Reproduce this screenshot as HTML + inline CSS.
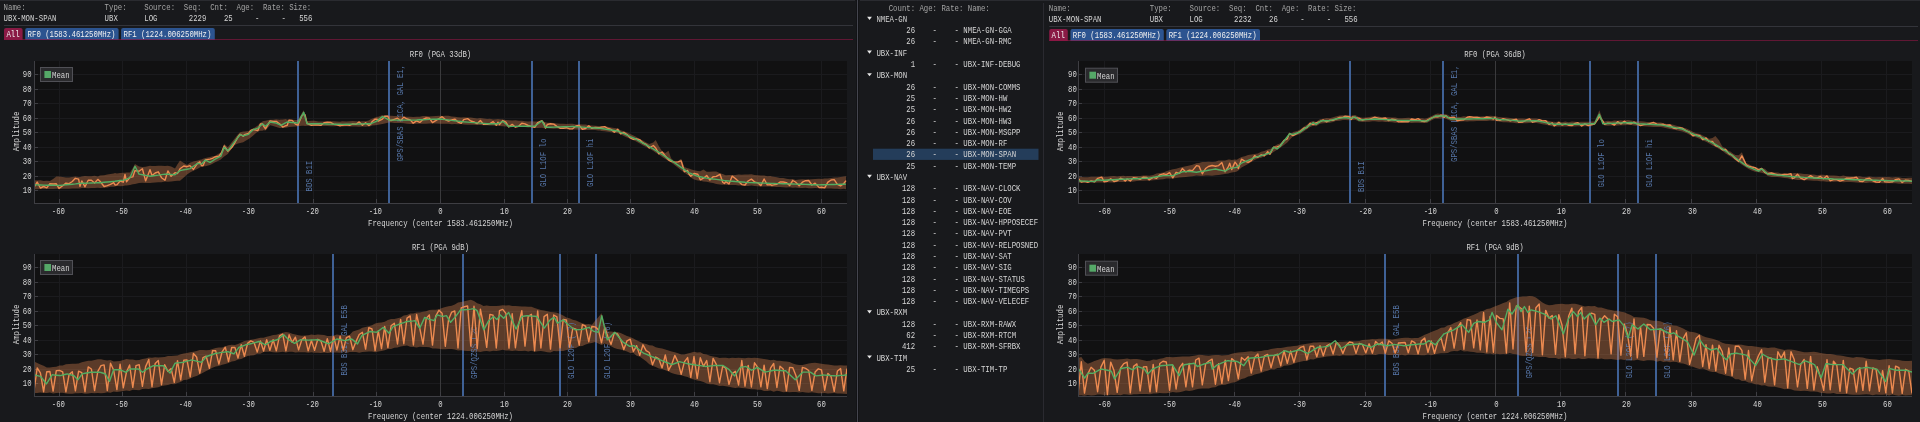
<!DOCTYPE html>
<html><head><meta charset="utf-8"><style>
html,body{margin:0;padding:0;background:#18191c;width:1920px;height:422px;overflow:hidden}
svg{display:block;will-change:transform}
text{font-family:"Liberation Mono",monospace;white-space:pre}
</style></head><body>
<svg width="1920" height="422" viewBox="0 0 1920 422">
<rect x="0" y="0" width="1920" height="422" fill="#18191c"/>
<rect x="0" y="0" width="855" height="1" fill="#2a2b30"/>
<rect x="860" y="0" width="1060" height="1" fill="#2a2b30"/>
<text transform="translate(3.60,10.00) scale(0.863,1)" fill="#a4a4a4" font-size="8.5">Name:</text>
<text transform="translate(104.60,10.00) scale(0.863,1)" fill="#a4a4a4" font-size="8.5">Type:</text>
<text transform="translate(144.30,10.00) scale(0.863,1)" fill="#a4a4a4" font-size="8.5">Source:</text>
<text transform="translate(183.80,10.00) scale(0.863,1)" fill="#a4a4a4" font-size="8.5">Seq:</text>
<text transform="translate(210.20,10.00) scale(0.863,1)" fill="#a4a4a4" font-size="8.5">Cnt:</text>
<text transform="translate(236.50,10.00) scale(0.863,1)" fill="#a4a4a4" font-size="8.5">Age:</text>
<text transform="translate(262.90,10.00) scale(0.863,1)" fill="#a4a4a4" font-size="8.5">Rate:</text>
<text transform="translate(289.20,10.00) scale(0.863,1)" fill="#a4a4a4" font-size="8.5">Size:</text>
<text transform="translate(3.60,21.00) scale(0.863,1)" fill="#d6d6d6" font-size="8.5">UBX-MON-SPAN</text>
<text transform="translate(104.60,21.00) scale(0.863,1)" fill="#d6d6d6" font-size="8.5">UBX</text>
<text transform="translate(144.30,21.00) scale(0.863,1)" fill="#d6d6d6" font-size="8.5">LOG</text>
<text transform="translate(206.40,21.00) scale(0.863,1)" fill="#d6d6d6" font-size="8.5" text-anchor="end">2229</text>
<text transform="translate(232.70,21.00) scale(0.863,1)" fill="#d6d6d6" font-size="8.5" text-anchor="end">25</text>
<text transform="translate(255.10,21.00) scale(0.863,1)" fill="#d6d6d6" font-size="8.5">-</text>
<text transform="translate(281.50,21.00) scale(0.863,1)" fill="#d6d6d6" font-size="8.5">-</text>
<text transform="translate(312.40,21.00) scale(0.863,1)" fill="#d6d6d6" font-size="8.5" text-anchor="end">556</text>
<rect x="4" y="25" width="849" height="1" fill="#33343a"/>
<path d="M4,40 V30 q0,-2 2,-2 H20.6 q2,0 2,2 V40 Z" fill="#8a1a45"/>
<text transform="translate(6.40,37.00) scale(0.863,1)" fill="#f0f0f0" font-size="8.5">All</text>
<path d="M25.2,40 V30 q0,-2 2,-2 H116.6 q2,0 2,2 V40 Z" fill="#2c5490"/>
<text transform="translate(27.60,37.00) scale(0.863,1)" fill="#f0f0f0" font-size="8.5">RF0 (1583.461250MHz)</text>
<path d="M121.1,40 V30 q0,-2 2,-2 H212.8 q2,0 2,2 V40 Z" fill="#2c5490"/>
<text transform="translate(123.50,37.00) scale(0.863,1)" fill="#f0f0f0" font-size="8.5">RF1 (1224.006250MHz)</text>
<rect x="4" y="39" width="849" height="1" fill="#8c1744" fill-opacity="0.62"/>
<text transform="translate(440.50,56.50) scale(0.863,1)" fill="#d6d6d6" font-size="8.5" text-anchor="middle">RF0 (PGA 33dB)</text>
<rect x="34.00" y="61" width="813.00" height="142.00" fill="#111112"/>
<rect x="34" y="190" width="813.00" height="1" fill="#1b1b1e"/>
<rect x="34" y="190" width="4" height="1" fill="#3e3e43"/>
<text transform="translate(31.60,193.30) scale(0.863,1)" fill="#d6d6d6" font-size="8.5" text-anchor="end">10</text>
<rect x="34" y="176" width="813.00" height="1" fill="#1b1b1e"/>
<rect x="34" y="176" width="4" height="1" fill="#3e3e43"/>
<text transform="translate(31.60,179.30) scale(0.863,1)" fill="#d6d6d6" font-size="8.5" text-anchor="end">20</text>
<rect x="34" y="161" width="813.00" height="1" fill="#1b1b1e"/>
<rect x="34" y="161" width="4" height="1" fill="#3e3e43"/>
<text transform="translate(31.60,164.30) scale(0.863,1)" fill="#d6d6d6" font-size="8.5" text-anchor="end">30</text>
<rect x="34" y="147" width="813.00" height="1" fill="#1b1b1e"/>
<rect x="34" y="147" width="4" height="1" fill="#3e3e43"/>
<text transform="translate(31.60,150.30) scale(0.863,1)" fill="#d6d6d6" font-size="8.5" text-anchor="end">40</text>
<rect x="34" y="132" width="813.00" height="1" fill="#1b1b1e"/>
<rect x="34" y="132" width="4" height="1" fill="#3e3e43"/>
<text transform="translate(31.60,135.30) scale(0.863,1)" fill="#d6d6d6" font-size="8.5" text-anchor="end">50</text>
<rect x="34" y="118" width="813.00" height="1" fill="#1b1b1e"/>
<rect x="34" y="118" width="4" height="1" fill="#3e3e43"/>
<text transform="translate(31.60,121.30) scale(0.863,1)" fill="#d6d6d6" font-size="8.5" text-anchor="end">60</text>
<rect x="34" y="103" width="813.00" height="1" fill="#1b1b1e"/>
<rect x="34" y="103" width="4" height="1" fill="#3e3e43"/>
<text transform="translate(31.60,106.30) scale(0.863,1)" fill="#d6d6d6" font-size="8.5" text-anchor="end">70</text>
<rect x="34" y="89" width="813.00" height="1" fill="#1b1b1e"/>
<rect x="34" y="89" width="4" height="1" fill="#3e3e43"/>
<text transform="translate(31.60,92.30) scale(0.863,1)" fill="#d6d6d6" font-size="8.5" text-anchor="end">80</text>
<rect x="34" y="74" width="813.00" height="1" fill="#1b1b1e"/>
<rect x="34" y="74" width="4" height="1" fill="#3e3e43"/>
<text transform="translate(31.60,77.30) scale(0.863,1)" fill="#d6d6d6" font-size="8.5" text-anchor="end">90</text>
<rect x="59" y="61" width="1" height="142.00" fill="#1b1b1e"/>
<rect x="59" y="199.00" width="1" height="4" fill="#3e3e43"/>
<text transform="translate(58.40,213.75) scale(0.863,1)" fill="#d6d6d6" font-size="8.5" text-anchor="middle">-60</text>
<rect x="122" y="61" width="1" height="142.00" fill="#1b1b1e"/>
<rect x="122" y="199.00" width="1" height="4" fill="#3e3e43"/>
<text transform="translate(121.40,213.75) scale(0.863,1)" fill="#d6d6d6" font-size="8.5" text-anchor="middle">-50</text>
<rect x="186" y="61" width="1" height="142.00" fill="#1b1b1e"/>
<rect x="186" y="199.00" width="1" height="4" fill="#3e3e43"/>
<text transform="translate(185.40,213.75) scale(0.863,1)" fill="#d6d6d6" font-size="8.5" text-anchor="middle">-40</text>
<rect x="249" y="61" width="1" height="142.00" fill="#1b1b1e"/>
<rect x="249" y="199.00" width="1" height="4" fill="#3e3e43"/>
<text transform="translate(248.40,213.75) scale(0.863,1)" fill="#d6d6d6" font-size="8.5" text-anchor="middle">-30</text>
<rect x="313" y="61" width="1" height="142.00" fill="#1b1b1e"/>
<rect x="313" y="199.00" width="1" height="4" fill="#3e3e43"/>
<text transform="translate(312.40,213.75) scale(0.863,1)" fill="#d6d6d6" font-size="8.5" text-anchor="middle">-20</text>
<rect x="376" y="61" width="1" height="142.00" fill="#1b1b1e"/>
<rect x="376" y="199.00" width="1" height="4" fill="#3e3e43"/>
<text transform="translate(375.40,213.75) scale(0.863,1)" fill="#d6d6d6" font-size="8.5" text-anchor="middle">-10</text>
<rect x="440" y="61" width="1" height="142.00" fill="#3a3a3c"/>
<rect x="440" y="199.00" width="1" height="4" fill="#3e3e43"/>
<text transform="translate(440.50,213.75) scale(0.863,1)" fill="#d6d6d6" font-size="8.5" text-anchor="middle">0</text>
<rect x="504" y="61" width="1" height="142.00" fill="#1b1b1e"/>
<rect x="504" y="199.00" width="1" height="4" fill="#3e3e43"/>
<text transform="translate(504.50,213.75) scale(0.863,1)" fill="#d6d6d6" font-size="8.5" text-anchor="middle">10</text>
<rect x="567" y="61" width="1" height="142.00" fill="#1b1b1e"/>
<rect x="567" y="199.00" width="1" height="4" fill="#3e3e43"/>
<text transform="translate(567.50,213.75) scale(0.863,1)" fill="#d6d6d6" font-size="8.5" text-anchor="middle">20</text>
<rect x="630" y="61" width="1" height="142.00" fill="#1b1b1e"/>
<rect x="630" y="199.00" width="1" height="4" fill="#3e3e43"/>
<text transform="translate(630.50,213.75) scale(0.863,1)" fill="#d6d6d6" font-size="8.5" text-anchor="middle">30</text>
<rect x="694" y="61" width="1" height="142.00" fill="#1b1b1e"/>
<rect x="694" y="199.00" width="1" height="4" fill="#3e3e43"/>
<text transform="translate(694.50,213.75) scale(0.863,1)" fill="#d6d6d6" font-size="8.5" text-anchor="middle">40</text>
<rect x="757" y="61" width="1" height="142.00" fill="#1b1b1e"/>
<rect x="757" y="199.00" width="1" height="4" fill="#3e3e43"/>
<text transform="translate(757.50,213.75) scale(0.863,1)" fill="#d6d6d6" font-size="8.5" text-anchor="middle">50</text>
<rect x="821" y="61" width="1" height="142.00" fill="#1b1b1e"/>
<rect x="821" y="199.00" width="1" height="4" fill="#3e3e43"/>
<text transform="translate(821.50,213.75) scale(0.863,1)" fill="#d6d6d6" font-size="8.5" text-anchor="middle">60</text>
<text transform="translate(440.50,225.75) scale(0.863,1)" fill="#d6d6d6" font-size="8.5" text-anchor="middle">Frequency (center 1583.461250MHz)</text>
<text transform="translate(18.60,131.50) rotate(-90) scale(0.863,1)" fill="#d6d6d6" font-size="8.5" text-anchor="middle">Amplitude</text>
<clipPath id="c0_61"><rect x="34.00" y="61" width="813.00" height="142.00"/></clipPath>
<g clip-path="url(#c0_61)">
<rect x="297" y="61" width="2" height="142.00" fill="#3f6196"/>
<rect x="388" y="61" width="2" height="142.00" fill="#3f6196"/>
<rect x="531" y="61" width="2" height="142.00" fill="#3f6196"/>
<rect x="578" y="61" width="2" height="142.00" fill="#3f6196"/>
<polygon points="34.0,180.2 37.2,180.5 40.4,180.3 43.6,180.9 46.8,180.7 49.9,181.0 53.1,179.0 56.3,176.4 59.0,176.6 62.7,177.0 65.9,177.6 69.1,177.5 72.3,177.1 75.4,176.6 78.6,177.1 80.0,176.9 81.8,176.5 85.0,176.1 88.2,176.3 91.4,176.3 94.6,175.7 97.8,176.4 100.0,175.6 104.1,175.2 107.3,174.6 110.5,174.0 113.7,173.6 115.0,173.1 116.9,173.5 120.1,172.9 123.3,172.7 125.0,172.8 126.5,172.5 130.0,172.6 132.8,167.9 135.0,164.0 139.0,166.5 142.4,167.0 145.6,166.7 150.0,165.8 152.0,165.9 155.2,166.1 158.3,165.7 161.5,165.7 165.0,166.1 167.9,165.8 171.1,166.5 175.0,168.5 177.5,164.3 180.0,160.4 183.8,163.0 187.0,164.9 190.0,162.7 193.4,161.4 197.7,160.6 199.8,159.7 201.6,159.6 203.0,158.7 205.4,158.0 210.0,157.0 212.5,156.2 214.7,156.0 218.9,153.6 220.8,152.7 222.1,149.3 224.2,143.9 227.8,147.3 231.7,142.2 234.7,138.6 238.0,134.3 240.1,132.2 243.2,131.5 244.4,131.5 248.6,131.0 250.8,129.7 253.2,128.6 257.8,125.5 260.4,122.8 262.4,121.5 263.6,120.9 265.5,120.7 270.1,119.7 273.1,119.8 276.3,119.2 279.5,119.7 280.9,119.6 282.7,119.5 285.9,119.1 287.1,119.7 289.1,119.6 292.2,119.8 295.4,119.9 297.9,120.1 301.8,113.2 303.7,110.3 305.0,114.4 307.1,121.2 311.4,120.8 314.6,120.8 318.4,121.4 320.9,121.4 324.1,121.4 327.3,121.4 330.5,121.2 333.7,121.2 336.9,121.4 340.1,121.7 342.1,121.3 346.4,121.4 349.6,121.3 352.8,121.0 356.0,121.2 359.2,121.4 362.4,121.3 365.6,121.3 368.8,120.6 370.6,119.2 372.0,118.8 375.1,117.5 377.0,116.8 378.3,116.7 382.4,115.1 384.7,115.4 387.9,115.2 389.5,115.7 391.1,115.8 394.3,115.9 397.5,116.1 400.6,116.1 403.8,116.5 407.0,116.8 410.2,116.8 413.2,117.0 416.6,116.7 419.8,116.8 423.0,116.0 426.2,116.1 429.3,116.4 432.5,116.2 435.7,116.0 440.0,115.8 442.1,116.1 445.3,115.8 448.5,115.8 451.7,116.5 454.8,116.7 458.0,117.2 461.2,117.4 463.7,117.3 467.6,117.6 470.8,117.4 474.0,118.1 477.2,118.5 480.4,117.9 483.5,118.5 487.4,119.0 489.9,118.8 493.1,119.5 496.3,119.3 498.0,119.0 499.5,119.2 502.8,119.5 505.9,120.1 508.7,120.2 512.2,120.6 515.4,120.3 518.6,120.7 521.8,120.7 525.0,121.3 528.2,121.5 531.4,121.3 534.8,121.4 537.7,121.6 541.9,122.0 544.1,122.1 545.5,122.2 547.3,122.8 550.5,122.7 553.7,123.1 556.9,123.5 560.1,123.7 563.2,123.7 566.4,124.0 569.6,123.8 572.7,123.8 576.0,124.4 579.2,124.2 582.4,124.4 585.6,124.6 588.8,125.3 591.9,125.6 595.1,125.8 598.3,126.0 600.0,126.1 601.5,126.0 604.7,126.3 607.9,126.8 611.1,127.6 614.3,127.9 617.8,128.4 620.6,130.2 623.8,131.2 627.0,132.4 630.2,133.9 633.4,135.4 635.6,136.6 639.8,139.2 643.0,140.4 646.1,142.5 649.3,143.9 653.3,142.5 655.7,140.0 658.9,146.2 662.1,151.3 665.3,153.1 668.5,150.8 671.1,158.3 674.8,161.8 678.0,161.0 681.2,158.7 684.4,167.1 687.6,168.2 688.9,168.4 690.8,169.2 694.0,170.2 697.8,171.0 700.3,171.3 703.5,169.6 706.7,171.7 709.9,171.7 713.1,171.6 716.3,171.4 720.0,173.3 722.7,174.0 724.4,174.7 725.8,175.2 729.0,175.1 732.2,174.9 735.4,174.9 738.6,174.5 741.8,174.7 745.0,174.5 748.1,174.6 751.4,174.3 754.5,175.0 757.7,175.3 760.9,175.5 764.1,175.5 767.3,176.2 770.5,176.1 771.8,176.6 773.7,176.8 776.9,177.2 780.0,178.1 783.2,178.1 786.4,178.8 789.6,179.3 792.8,179.1 795.5,180.0 799.2,179.6 802.4,179.3 805.6,179.4 808.7,179.4 811.9,179.2 815.1,179.1 819.2,178.8 821.5,179.1 824.7,178.5 827.9,178.4 831.1,178.1 834.2,177.4 837.4,177.4 840.6,177.0 843.8,176.6 846.0,176.3 846.0,189.3 843.8,188.8 840.6,189.2 837.4,188.8 834.2,188.8 831.1,188.6 827.9,188.6 824.7,188.6 821.5,188.5 819.2,188.2 815.1,188.1 811.9,188.2 808.7,188.3 805.6,187.8 802.4,187.9 799.2,187.9 795.5,187.6 792.8,187.7 789.6,187.2 786.4,187.5 783.2,187.2 780.0,186.9 776.9,187.0 773.7,186.7 771.8,187.0 770.5,186.5 767.3,186.4 764.1,186.4 760.9,186.5 757.7,186.3 754.5,186.0 751.4,185.6 748.1,186.0 745.0,185.9 741.8,185.3 738.6,185.5 735.4,185.0 732.2,185.1 729.0,184.9 725.8,184.8 724.4,184.6 722.7,184.8 720.0,184.6 716.3,183.9 713.1,183.1 709.9,182.4 706.7,181.8 703.5,181.4 700.3,180.7 697.8,180.4 694.0,179.4 690.8,177.5 688.9,175.5 687.6,174.9 684.4,172.5 681.2,170.2 678.0,167.8 674.8,165.3 671.1,162.5 668.5,160.9 665.3,159.0 662.1,156.9 658.9,154.5 655.7,152.7 653.3,150.9 649.3,148.6 646.1,146.9 643.0,145.5 639.8,143.4 635.6,141.3 633.4,140.3 630.2,138.8 627.0,137.5 623.8,136.1 620.6,134.3 617.8,133.2 614.3,132.8 611.1,132.3 607.9,131.8 604.7,131.3 601.5,130.9 600.0,130.4 598.3,130.4 595.1,130.1 591.9,130.0 588.8,129.9 585.6,130.0 582.4,129.9 579.2,129.8 576.0,129.5 572.7,129.5 569.6,129.4 566.4,129.2 563.2,128.9 560.1,128.8 556.9,128.5 553.7,128.7 550.5,128.5 547.3,128.3 545.5,128.3 544.1,128.2 541.9,127.7 537.7,127.9 534.8,127.8 531.4,127.3 528.2,127.6 525.0,127.1 521.8,127.0 518.6,127.1 515.4,126.9 512.2,126.7 508.7,126.6 505.9,126.4 502.8,126.3 499.5,126.0 498.0,125.9 496.3,125.7 493.1,125.6 489.9,125.6 487.4,125.3 483.5,125.3 480.4,125.0 477.2,125.1 474.0,124.8 470.8,124.8 467.6,124.7 463.7,124.4 461.2,124.1 458.0,124.2 454.8,124.0 451.7,124.2 448.5,123.7 445.3,123.7 442.1,123.8 440.0,123.7 435.7,123.4 432.5,123.6 429.3,123.5 426.2,123.7 423.0,123.7 419.8,123.7 416.6,123.8 413.2,124.0 410.2,124.0 407.0,123.8 403.8,123.3 400.6,123.1 397.5,123.0 394.3,123.1 391.1,122.6 389.5,122.6 387.9,122.8 384.7,123.5 382.4,123.9 378.3,124.7 377.0,125.0 375.1,125.3 372.0,125.6 370.6,126.2 368.8,126.3 365.6,126.8 362.4,126.6 359.2,126.8 356.0,126.6 352.8,126.5 349.6,126.6 346.4,126.2 342.1,126.6 340.1,126.3 336.9,126.1 333.7,126.3 330.5,126.3 327.3,125.9 324.1,126.0 320.9,125.8 318.4,125.9 314.6,125.8 311.4,125.9 307.1,125.7 305.0,125.9 303.7,125.7 301.8,125.8 297.9,126.2 295.4,126.4 292.2,126.8 289.1,127.1 287.1,127.4 285.9,127.7 282.7,127.9 280.9,128.1 279.5,128.1 276.3,127.0 273.1,126.0 270.1,125.2 265.5,130.4 263.6,130.3 262.4,130.8 260.4,130.7 257.8,131.4 253.2,135.4 250.8,137.6 248.6,138.9 244.4,141.5 243.2,142.3 240.1,142.9 238.0,143.6 234.7,144.9 231.7,148.7 227.8,153.9 224.2,156.6 222.1,158.2 220.8,159.4 218.9,160.5 214.7,162.6 212.5,163.7 210.0,165.1 205.4,166.2 203.0,166.3 201.6,166.6 199.8,167.4 197.7,168.8 193.4,170.8 190.0,172.5 187.0,174.6 183.8,177.5 180.0,180.8 177.5,180.8 175.0,180.9 171.1,181.4 167.9,181.7 165.0,181.6 161.5,182.2 158.3,182.3 155.2,182.4 152.0,182.7 150.0,183.0 145.6,182.9 142.4,182.8 139.0,183.1 135.0,184.0 132.8,184.3 130.0,185.0 126.5,185.6 125.0,185.4 123.3,185.9 120.1,186.2 116.9,186.1 115.0,186.6 113.7,186.7 110.5,186.8 107.3,187.4 104.1,187.7 100.0,188.0 97.8,187.8 94.6,187.9 91.4,187.9 88.2,188.2 85.0,188.1 81.8,188.1 80.0,188.5 78.6,188.6 75.4,188.5 72.3,188.4 69.1,188.8 65.9,188.8 62.7,188.8 59.0,189.0 56.3,188.8 53.1,188.9 49.9,188.9 46.8,189.1 43.6,189.1 40.4,189.1 37.2,189.2 34.0,189.2" fill="#dd8452" fill-opacity="0.37"/>
<text transform="translate(311.80,191.50) rotate(-90) scale(0.863,1)" fill="#5676a8" font-size="8.5">BDS B1I</text>
<text transform="translate(402.70,161.50) rotate(-90) scale(0.863,1)" fill="#5676a8" font-size="8.5">GPS/SBAS L1CA, GAL E1, BDS B1C</text>
<text transform="translate(546.30,187.00) rotate(-90) scale(0.863,1)" fill="#5676a8" font-size="8.5">GLO L1OF lo</text>
<text transform="translate(593.00,187.00) rotate(-90) scale(0.863,1)" fill="#5676a8" font-size="8.5">GLO L1OF hi</text>
<polyline points="34.0,187.3 37.2,182.1 40.4,188.0 43.6,186.5 46.8,187.8 49.9,183.7 53.1,184.0 56.3,183.8 59.0,188.4 62.7,185.7 65.9,183.1 69.1,183.6 72.3,181.5 75.4,178.3 78.6,179.2 80.0,186.3 81.8,180.9 85.0,186.8 88.2,180.2 91.4,180.3 94.6,183.0 97.8,179.4 100.0,181.2 104.1,186.5 107.3,185.6 110.5,184.4 113.7,182.6 115.0,185.0 116.9,184.9 120.1,181.0 123.3,182.2 125.0,174.4 126.5,181.7 130.0,177.3 132.8,176.9 135.0,170.6 139.0,171.3 142.4,168.8 145.6,180.9 150.0,169.7 152.0,175.5 155.2,173.0 158.3,171.8 161.5,177.7 165.0,180.2 167.9,170.9 171.1,176.3 175.0,172.7 177.5,173.5 180.0,168.8 183.8,166.0 187.0,166.7 190.0,165.7 193.4,169.4 197.7,163.2 199.8,161.7 201.6,165.8 203.0,165.7 205.4,159.9 210.0,159.1 212.5,158.3 214.7,157.0 218.9,156.2 220.8,153.8 222.1,151.3 224.2,145.9 227.8,151.2 231.7,147.6 234.7,143.0 238.0,136.9 240.1,134.3 243.2,136.2 244.4,134.7 248.6,133.4 250.8,130.3 253.2,129.3 257.8,130.7 260.4,123.9 262.4,123.9 263.6,126.0 265.5,128.8 270.1,120.9 273.1,121.5 276.3,121.4 279.5,123.8 280.9,124.9 282.7,127.1 285.9,125.7 287.1,125.4 289.1,120.1 292.2,120.4 295.4,124.1 297.9,125.2 301.8,115.7 303.7,114.3 305.0,114.7 307.1,123.4 311.4,125.3 314.6,124.9 318.4,125.0 320.9,125.4 324.1,122.8 327.3,122.3 330.5,122.4 333.7,124.2 336.9,124.8 340.1,125.8 342.1,125.2 346.4,124.8 349.6,125.3 352.8,123.9 356.0,124.3 359.2,121.9 362.4,125.2 365.6,122.7 368.8,125.6 370.6,124.3 372.0,121.7 375.1,119.1 377.0,119.2 378.3,121.0 382.4,119.1 384.7,116.2 387.9,116.3 389.5,120.2 391.1,120.5 394.3,119.3 397.5,118.2 400.6,120.6 403.8,117.1 407.0,119.0 410.2,119.9 413.2,123.2 416.6,120.9 419.8,122.4 423.0,119.5 426.2,118.0 429.3,118.1 432.5,122.6 435.7,120.7 440.0,118.0 442.1,116.7 445.3,119.6 448.5,121.1 451.7,119.9 454.8,119.1 458.0,122.0 461.2,123.4 463.7,119.7 467.6,118.6 470.8,121.0 474.0,122.0 477.2,123.6 480.4,120.5 483.5,124.3 487.4,124.4 489.9,123.7 493.1,121.6 496.3,125.3 498.0,122.2 499.5,124.6 502.8,120.5 505.9,122.2 508.7,126.9 512.2,124.4 515.4,127.2 518.6,126.3 521.8,123.3 525.0,123.9 528.2,125.5 531.4,126.5 534.8,127.4 537.7,122.6 541.9,120.7 544.1,123.5 545.5,128.1 547.3,124.5 550.5,123.8 553.7,124.1 556.9,126.3 560.1,128.2 563.2,128.2 566.4,127.7 569.6,128.9 572.7,128.7 576.0,126.0 579.2,125.5 582.4,129.2 585.6,128.5 588.8,125.8 591.9,128.4 595.1,127.5 598.3,127.7 600.0,127.7 601.5,127.1 604.7,126.7 607.9,128.5 611.1,129.4 614.3,132.3 617.8,129.3 620.6,133.8 623.8,132.4 627.0,134.5 630.2,137.8 633.4,139.3 635.6,138.7 639.8,139.7 643.0,143.0 646.1,144.3 649.3,148.0 653.3,145.5 655.7,148.0 658.9,153.8 662.1,152.0 665.3,156.0 668.5,159.8 671.1,161.3 674.8,162.1 678.0,161.9 681.2,160.9 684.4,171.7 687.6,170.4 688.9,174.0 690.8,176.2 694.0,173.5 697.8,174.3 700.3,179.8 703.5,178.2 706.7,175.5 709.9,180.0 713.1,176.7 716.3,176.4 720.0,174.3 722.7,182.3 724.4,183.5 725.8,181.6 729.0,183.9 732.2,176.1 735.4,178.5 738.6,181.4 741.8,184.6 745.0,185.0 748.1,181.0 751.4,179.1 754.5,181.8 757.7,182.8 760.9,185.6 764.1,179.0 767.3,184.9 770.5,184.6 771.8,185.4 773.7,184.9 776.9,184.2 780.0,182.0 783.2,182.0 786.4,182.6 789.6,185.5 792.8,180.5 795.5,182.0 799.2,185.8 802.4,182.2 805.6,180.7 808.7,180.5 811.9,185.0 815.1,183.1 819.2,187.6 821.5,187.2 824.7,187.9 827.9,182.2 831.1,180.0 834.2,179.6 837.4,184.3 840.6,186.0 843.8,183.5 846.0,180.6" fill="none" stroke="#ec8a50" stroke-width="1.4" stroke-linejoin="round"/>
<polyline points="34.0,184.8 37.2,184.9 40.4,185.0 43.6,185.1 46.8,185.2 49.9,185.2 53.1,185.3 56.3,185.4 59.0,185.5 62.7,185.1 65.9,184.8 69.1,184.5 72.3,184.2 75.4,183.9 78.6,183.5 80.0,183.4 81.8,183.3 85.0,183.2 88.2,183.1 91.4,183.0 94.6,182.9 97.8,182.8 100.0,182.7 104.1,182.3 107.3,182.0 110.5,181.7 113.7,181.4 115.0,181.3 116.9,181.0 120.1,180.5 123.3,180.1 125.0,179.8 126.5,179.2 130.0,177.7 132.8,171.3 135.0,166.3 139.0,174.1 142.4,174.8 145.6,175.4 150.0,176.3 152.0,176.0 155.2,175.5 158.3,175.1 161.5,174.6 165.0,174.1 167.9,174.3 171.1,174.5 175.0,174.8 177.5,172.7 180.0,170.6 183.8,169.8 187.0,169.2 190.0,168.6 193.4,166.2 197.7,163.2 199.8,163.6 201.6,163.9 203.0,162.5 205.4,160.1 210.0,162.4 212.5,160.8 214.7,159.3 218.9,157.2 220.8,156.2 222.1,152.8 224.2,147.3 227.8,150.8 231.7,145.6 234.7,141.6 238.0,137.4 240.1,134.7 243.2,135.9 244.4,135.5 248.6,134.3 250.8,132.1 253.2,129.7 257.8,128.2 260.4,125.8 262.4,123.9 263.6,124.8 265.5,126.2 270.1,122.0 273.1,122.5 276.3,123.1 279.5,124.7 280.9,125.4 282.7,124.4 285.9,122.7 287.1,122.0 289.1,122.2 292.2,122.5 295.4,122.8 297.9,123.1 301.8,115.8 303.7,112.3 305.0,116.7 307.1,123.9 311.4,123.8 314.6,123.8 318.4,123.7 320.9,123.8 324.1,123.9 327.3,124.0 330.5,124.1 333.7,124.2 336.9,124.2 340.1,124.3 342.1,124.4 346.4,124.3 349.6,124.2 352.8,124.1 356.0,124.1 359.2,124.0 362.4,123.9 365.6,123.8 368.8,123.7 370.6,123.7 372.0,123.1 375.1,121.8 377.0,121.0 378.3,119.9 382.4,116.6 384.7,117.7 387.9,119.3 389.5,120.1 391.1,120.1 394.3,120.1 397.5,120.1 400.6,120.1 403.8,120.1 407.0,120.1 410.2,120.1 413.2,120.1 416.6,120.0 419.8,119.8 423.0,119.7 426.2,119.6 429.3,119.4 432.5,119.3 435.7,119.2 440.0,119.0 442.1,119.2 445.3,119.6 448.5,120.0 451.7,120.4 454.8,120.7 458.0,121.1 461.2,121.5 463.7,121.8 467.6,122.1 470.8,122.4 474.0,122.6 477.2,122.9 480.4,123.1 483.5,123.4 487.4,123.7 489.9,123.7 493.1,123.7 496.3,123.7 498.0,123.7 499.5,123.0 502.8,121.3 505.9,124.0 508.7,126.5 512.2,126.4 515.4,126.4 518.6,126.3 521.8,126.3 525.0,126.3 528.2,126.2 531.4,126.2 534.8,126.1 537.7,124.0 541.9,120.9 544.1,124.8 545.5,127.3 547.3,127.2 550.5,127.2 553.7,127.1 556.9,127.0 560.1,126.9 563.2,126.8 566.4,126.7 569.6,126.6 572.7,126.5 576.0,126.7 579.2,126.9 582.4,127.1 585.6,127.4 588.8,127.6 591.9,127.8 595.1,128.0 598.3,128.2 600.0,128.3 601.5,128.5 604.7,129.0 607.9,129.5 611.1,130.0 614.3,130.5 617.8,131.0 620.6,132.3 623.8,133.7 627.0,135.1 630.2,136.6 633.4,138.0 635.6,139.0 639.8,141.3 643.0,143.1 646.1,144.8 649.3,146.6 653.3,148.8 655.7,150.4 658.9,152.4 662.1,154.5 665.3,156.6 668.5,158.6 671.1,160.3 674.8,162.9 678.0,165.1 681.2,167.4 684.4,169.6 687.6,171.9 688.9,172.8 690.8,173.5 694.0,174.8 697.8,176.3 700.3,176.8 703.5,177.5 706.7,178.1 709.9,178.5 713.1,179.0 716.3,179.4 720.0,179.9 722.7,180.3 724.4,180.6 725.8,180.7 729.0,181.0 732.2,181.2 735.4,181.5 738.6,181.7 741.8,182.0 745.0,182.3 748.1,182.5 751.4,182.6 754.5,182.7 757.7,182.9 760.9,183.0 764.1,183.1 767.3,183.2 770.5,183.4 771.8,183.4 773.7,183.5 776.9,183.6 780.0,183.6 783.2,183.7 786.4,183.8 789.6,183.9 792.8,184.0 795.5,184.1 799.2,184.2 802.4,184.3 805.6,184.4 808.7,184.5 811.9,184.7 815.1,184.8 819.2,184.9 821.5,184.8 824.7,184.7 827.9,184.6 831.1,184.5 834.2,184.5 837.4,184.4 840.6,184.3 843.8,184.2 846.0,184.1" fill="none" stroke="#52ad62" stroke-width="1.4" stroke-linejoin="round"/>
</g>
<rect x="34.00" y="61" width="1" height="143.00" fill="#3e3e43"/>
<rect x="34.00" y="203.00" width="813.00" height="1" fill="#3e3e43"/>
<rect x="40.50" y="67.50" width="32" height="14" fill="#2a2a2d" stroke="#505056" stroke-width="1"/>
<rect x="44.40" y="71.00" width="6.6" height="7" fill="#55a868"/>
<text transform="translate(52.00,78.00) scale(0.863,1)" fill="#d6d6d6" font-size="8.5">Mean</text>
<text transform="translate(440.50,249.50) scale(0.863,1)" fill="#d6d6d6" font-size="8.5" text-anchor="middle">RF1 (PGA 9dB)</text>
<rect x="34.00" y="254" width="813.00" height="142.00" fill="#111112"/>
<rect x="34" y="383" width="813.00" height="1" fill="#1b1b1e"/>
<rect x="34" y="383" width="4" height="1" fill="#3e3e43"/>
<text transform="translate(31.60,386.30) scale(0.863,1)" fill="#d6d6d6" font-size="8.5" text-anchor="end">10</text>
<rect x="34" y="369" width="813.00" height="1" fill="#1b1b1e"/>
<rect x="34" y="369" width="4" height="1" fill="#3e3e43"/>
<text transform="translate(31.60,372.30) scale(0.863,1)" fill="#d6d6d6" font-size="8.5" text-anchor="end">20</text>
<rect x="34" y="354" width="813.00" height="1" fill="#1b1b1e"/>
<rect x="34" y="354" width="4" height="1" fill="#3e3e43"/>
<text transform="translate(31.60,357.30) scale(0.863,1)" fill="#d6d6d6" font-size="8.5" text-anchor="end">30</text>
<rect x="34" y="340" width="813.00" height="1" fill="#1b1b1e"/>
<rect x="34" y="340" width="4" height="1" fill="#3e3e43"/>
<text transform="translate(31.60,343.30) scale(0.863,1)" fill="#d6d6d6" font-size="8.5" text-anchor="end">40</text>
<rect x="34" y="325" width="813.00" height="1" fill="#1b1b1e"/>
<rect x="34" y="325" width="4" height="1" fill="#3e3e43"/>
<text transform="translate(31.60,328.30) scale(0.863,1)" fill="#d6d6d6" font-size="8.5" text-anchor="end">50</text>
<rect x="34" y="311" width="813.00" height="1" fill="#1b1b1e"/>
<rect x="34" y="311" width="4" height="1" fill="#3e3e43"/>
<text transform="translate(31.60,314.30) scale(0.863,1)" fill="#d6d6d6" font-size="8.5" text-anchor="end">60</text>
<rect x="34" y="296" width="813.00" height="1" fill="#1b1b1e"/>
<rect x="34" y="296" width="4" height="1" fill="#3e3e43"/>
<text transform="translate(31.60,299.30) scale(0.863,1)" fill="#d6d6d6" font-size="8.5" text-anchor="end">70</text>
<rect x="34" y="282" width="813.00" height="1" fill="#1b1b1e"/>
<rect x="34" y="282" width="4" height="1" fill="#3e3e43"/>
<text transform="translate(31.60,285.30) scale(0.863,1)" fill="#d6d6d6" font-size="8.5" text-anchor="end">80</text>
<rect x="34" y="267" width="813.00" height="1" fill="#1b1b1e"/>
<rect x="34" y="267" width="4" height="1" fill="#3e3e43"/>
<text transform="translate(31.60,270.30) scale(0.863,1)" fill="#d6d6d6" font-size="8.5" text-anchor="end">90</text>
<rect x="59" y="254" width="1" height="142.00" fill="#1b1b1e"/>
<rect x="59" y="392.00" width="1" height="4" fill="#3e3e43"/>
<text transform="translate(58.40,406.75) scale(0.863,1)" fill="#d6d6d6" font-size="8.5" text-anchor="middle">-60</text>
<rect x="122" y="254" width="1" height="142.00" fill="#1b1b1e"/>
<rect x="122" y="392.00" width="1" height="4" fill="#3e3e43"/>
<text transform="translate(121.40,406.75) scale(0.863,1)" fill="#d6d6d6" font-size="8.5" text-anchor="middle">-50</text>
<rect x="186" y="254" width="1" height="142.00" fill="#1b1b1e"/>
<rect x="186" y="392.00" width="1" height="4" fill="#3e3e43"/>
<text transform="translate(185.40,406.75) scale(0.863,1)" fill="#d6d6d6" font-size="8.5" text-anchor="middle">-40</text>
<rect x="249" y="254" width="1" height="142.00" fill="#1b1b1e"/>
<rect x="249" y="392.00" width="1" height="4" fill="#3e3e43"/>
<text transform="translate(248.40,406.75) scale(0.863,1)" fill="#d6d6d6" font-size="8.5" text-anchor="middle">-30</text>
<rect x="313" y="254" width="1" height="142.00" fill="#1b1b1e"/>
<rect x="313" y="392.00" width="1" height="4" fill="#3e3e43"/>
<text transform="translate(312.40,406.75) scale(0.863,1)" fill="#d6d6d6" font-size="8.5" text-anchor="middle">-20</text>
<rect x="376" y="254" width="1" height="142.00" fill="#1b1b1e"/>
<rect x="376" y="392.00" width="1" height="4" fill="#3e3e43"/>
<text transform="translate(375.40,406.75) scale(0.863,1)" fill="#d6d6d6" font-size="8.5" text-anchor="middle">-10</text>
<rect x="440" y="254" width="1" height="142.00" fill="#3a3a3c"/>
<rect x="440" y="392.00" width="1" height="4" fill="#3e3e43"/>
<text transform="translate(440.50,406.75) scale(0.863,1)" fill="#d6d6d6" font-size="8.5" text-anchor="middle">0</text>
<rect x="504" y="254" width="1" height="142.00" fill="#1b1b1e"/>
<rect x="504" y="392.00" width="1" height="4" fill="#3e3e43"/>
<text transform="translate(504.50,406.75) scale(0.863,1)" fill="#d6d6d6" font-size="8.5" text-anchor="middle">10</text>
<rect x="567" y="254" width="1" height="142.00" fill="#1b1b1e"/>
<rect x="567" y="392.00" width="1" height="4" fill="#3e3e43"/>
<text transform="translate(567.50,406.75) scale(0.863,1)" fill="#d6d6d6" font-size="8.5" text-anchor="middle">20</text>
<rect x="630" y="254" width="1" height="142.00" fill="#1b1b1e"/>
<rect x="630" y="392.00" width="1" height="4" fill="#3e3e43"/>
<text transform="translate(630.50,406.75) scale(0.863,1)" fill="#d6d6d6" font-size="8.5" text-anchor="middle">30</text>
<rect x="694" y="254" width="1" height="142.00" fill="#1b1b1e"/>
<rect x="694" y="392.00" width="1" height="4" fill="#3e3e43"/>
<text transform="translate(694.50,406.75) scale(0.863,1)" fill="#d6d6d6" font-size="8.5" text-anchor="middle">40</text>
<rect x="757" y="254" width="1" height="142.00" fill="#1b1b1e"/>
<rect x="757" y="392.00" width="1" height="4" fill="#3e3e43"/>
<text transform="translate(757.50,406.75) scale(0.863,1)" fill="#d6d6d6" font-size="8.5" text-anchor="middle">50</text>
<rect x="821" y="254" width="1" height="142.00" fill="#1b1b1e"/>
<rect x="821" y="392.00" width="1" height="4" fill="#3e3e43"/>
<text transform="translate(821.50,406.75) scale(0.863,1)" fill="#d6d6d6" font-size="8.5" text-anchor="middle">60</text>
<text transform="translate(440.50,418.75) scale(0.863,1)" fill="#d6d6d6" font-size="8.5" text-anchor="middle">Frequency (center 1224.006250MHz)</text>
<text transform="translate(18.60,324.50) rotate(-90) scale(0.863,1)" fill="#d6d6d6" font-size="8.5" text-anchor="middle">Amplitude</text>
<clipPath id="c0_254"><rect x="34.00" y="254" width="813.00" height="142.00"/></clipPath>
<g clip-path="url(#c0_254)">
<rect x="332" y="254" width="2" height="142.00" fill="#3f6196"/>
<rect x="462" y="254" width="2" height="142.00" fill="#3f6196"/>
<rect x="559" y="254" width="2" height="142.00" fill="#3f6196"/>
<rect x="595" y="254" width="2" height="142.00" fill="#3f6196"/>
<polygon points="34.0,361.6 37.2,363.1 40.4,364.4 43.6,365.8 46.8,367.5 49.9,367.6 53.1,367.0 56.3,366.7 59.5,365.6 62.7,365.4 65.9,364.2 69.1,364.1 72.3,363.8 75.4,363.8 78.6,363.4 81.8,362.3 85.0,361.4 88.2,360.8 91.4,360.8 94.6,359.9 97.8,359.2 101.0,359.2 104.1,360.0 107.3,360.4 110.5,360.1 113.7,361.4 116.9,361.2 120.1,361.0 123.3,359.9 126.5,359.0 129.6,359.4 132.8,359.6 136.0,360.3 139.2,359.9 142.4,359.0 145.6,358.4 148.8,357.4 152.0,357.8 155.2,357.2 158.3,357.4 161.5,357.2 164.7,356.9 167.9,356.1 171.1,355.9 174.3,355.8 177.5,355.4 180.7,354.3 183.8,353.6 187.0,353.1 190.2,352.2 193.4,351.8 196.6,350.9 199.8,350.1 203.0,349.9 206.2,350.2 209.4,350.1 212.5,348.9 215.7,348.1 218.9,347.5 222.1,347.4 225.3,346.2 228.5,345.3 231.7,344.8 234.9,344.9 238.0,344.1 241.2,342.6 244.4,341.0 247.6,340.4 250.8,339.8 254.0,339.3 257.2,338.4 260.4,337.8 263.6,337.8 266.7,336.7 269.9,335.9 273.1,334.9 276.3,334.7 279.5,333.8 282.7,332.7 285.9,332.1 289.1,332.6 292.2,333.8 295.4,334.6 298.6,335.2 301.8,335.7 305.0,335.5 308.2,335.3 311.4,334.4 314.6,334.9 317.8,334.4 320.9,334.8 324.1,335.1 327.3,336.0 330.5,335.9 333.7,335.4 336.9,334.5 340.1,335.0 343.3,335.0 346.4,335.5 349.6,335.1 352.8,331.4 356.0,330.6 359.2,329.6 362.4,327.8 365.6,327.1 368.8,326.2 372.0,325.3 375.1,323.4 378.3,322.8 381.5,322.6 384.7,321.7 387.9,320.0 391.1,318.9 394.3,319.0 397.5,318.2 400.6,317.5 403.8,315.6 407.0,315.0 410.2,313.6 413.4,313.5 416.6,312.4 419.8,312.5 423.0,311.7 426.2,311.2 429.3,310.0 432.5,309.8 435.7,309.7 438.9,309.3 442.1,308.0 445.3,306.9 448.5,306.3 451.7,305.7 454.8,304.4 458.0,302.6 461.2,301.9 464.4,301.2 467.6,300.4 470.8,299.7 474.0,301.0 477.2,303.2 480.4,304.2 483.5,306.1 486.7,305.6 489.9,305.9 493.1,305.9 496.3,305.9 499.5,305.7 502.7,305.3 505.9,305.4 509.0,305.3 512.2,305.9 515.4,305.9 518.6,306.2 521.8,306.4 525.0,306.6 528.2,306.7 531.4,306.8 534.6,307.9 537.7,308.9 540.9,309.9 544.1,310.6 547.3,311.3 550.5,311.9 553.7,312.2 556.9,312.8 560.1,314.0 563.2,315.4 566.4,317.4 569.6,318.3 572.8,319.7 576.0,320.6 579.2,322.1 582.4,323.2 585.6,324.2 588.8,324.0 591.9,324.7 595.1,320.7 598.3,317.2 601.5,313.2 604.7,324.3 607.9,331.6 611.1,331.5 614.3,332.1 617.4,331.9 620.6,333.1 623.8,334.6 627.0,336.0 630.2,337.1 633.4,338.4 636.6,340.2 639.8,341.8 643.0,343.2 646.1,343.9 649.3,345.3 652.5,345.5 655.7,347.2 658.9,347.9 662.1,348.6 665.3,349.4 668.5,350.4 671.6,351.6 674.8,352.3 678.0,353.3 681.2,354.5 684.4,354.6 687.6,353.4 690.8,352.8 694.0,351.8 697.2,352.5 700.3,352.2 703.5,354.0 706.7,354.6 709.9,355.7 713.1,356.4 716.3,357.0 719.5,358.0 722.7,357.8 725.8,357.7 729.0,358.2 732.2,357.8 735.4,358.1 738.6,357.7 741.8,358.0 745.0,358.3 748.2,357.7 751.4,357.9 754.5,357.8 757.7,358.1 760.9,358.6 764.1,359.1 767.3,359.5 770.5,360.2 773.7,359.8 776.9,360.7 780.0,360.7 783.2,361.2 786.4,361.5 789.6,362.1 792.8,363.5 796.0,364.5 799.2,365.0 802.4,365.0 805.6,364.2 808.7,363.6 811.9,363.0 815.1,362.7 818.3,363.2 821.5,363.7 824.7,364.2 827.9,364.5 831.1,364.9 834.2,365.4 837.4,365.5 840.6,365.3 843.8,365.6 847.0,365.6 847.0,394.1 843.8,393.8 840.6,393.4 837.4,393.5 834.2,392.9 831.1,393.2 827.9,393.4 824.7,393.1 821.5,393.3 818.3,393.3 815.1,392.8 811.9,392.3 808.7,392.7 805.6,392.4 802.4,392.1 799.2,392.6 796.0,391.9 792.8,392.0 789.6,392.2 786.4,392.1 783.2,392.2 780.0,391.3 776.9,390.8 773.7,391.7 770.5,390.5 767.3,391.1 764.1,391.1 760.9,389.8 757.7,389.7 754.5,389.2 751.4,389.3 748.2,388.7 745.0,388.3 741.8,387.9 738.6,387.6 735.4,388.1 732.2,387.6 729.0,386.8 725.8,386.2 722.7,385.7 719.5,386.0 716.3,385.0 713.1,384.2 709.9,384.2 706.7,383.5 703.5,382.1 700.3,380.9 697.2,380.6 694.0,379.5 690.8,378.8 687.6,377.0 684.4,376.2 681.2,375.3 678.0,374.7 674.8,373.9 671.6,372.9 668.5,371.5 665.3,370.3 662.1,369.0 658.9,368.6 655.7,366.9 652.5,365.8 649.3,364.2 646.1,361.3 643.0,359.1 639.8,356.8 636.6,355.8 633.4,352.9 630.2,353.0 627.0,351.5 623.8,350.6 620.6,349.6 617.4,349.1 614.3,347.9 611.1,346.2 607.9,344.7 604.7,343.6 601.5,344.9 598.3,343.6 595.1,342.1 591.9,343.1 588.8,343.4 585.6,344.4 582.4,346.1 579.2,346.3 576.0,347.9 572.8,348.3 569.6,349.4 566.4,349.9 563.2,351.0 560.1,351.0 556.9,351.3 553.7,351.0 550.5,352.5 547.3,352.2 544.1,351.4 540.9,351.1 537.7,351.2 534.6,351.8 531.4,350.8 528.2,351.6 525.0,350.8 521.8,351.0 518.6,351.1 515.4,350.6 512.2,351.0 509.0,350.5 505.9,350.4 502.7,349.8 499.5,350.5 496.3,351.0 493.1,350.8 489.9,351.6 486.7,351.0 483.5,351.3 480.4,351.9 477.2,351.6 474.0,351.6 470.8,351.0 467.6,351.1 464.4,350.7 461.2,350.2 458.0,350.6 454.8,349.4 451.7,349.1 448.5,349.1 445.3,349.2 442.1,349.2 438.9,348.7 435.7,348.6 432.5,348.4 429.3,347.3 426.2,347.1 423.0,347.1 419.8,346.7 416.6,347.5 413.4,347.1 410.2,346.7 407.0,345.4 403.8,346.0 400.6,346.5 397.5,347.4 394.3,347.7 391.1,348.9 387.9,348.9 384.7,350.3 381.5,350.9 378.3,351.5 375.1,352.2 372.0,351.5 368.8,351.6 365.6,351.8 362.4,352.1 359.2,352.8 356.0,351.9 352.8,351.9 349.6,352.1 346.4,353.0 343.3,352.1 340.1,352.8 336.9,352.4 333.7,352.6 330.5,352.8 327.3,352.9 324.1,352.5 320.9,352.9 317.8,352.7 314.6,352.8 311.4,352.2 308.2,352.8 305.0,352.3 301.8,352.3 298.6,352.2 295.4,352.5 292.2,351.7 289.1,351.8 285.9,352.5 282.7,351.8 279.5,352.3 276.3,352.5 273.1,352.3 269.9,351.7 266.7,351.8 263.6,352.1 260.4,353.8 257.2,353.7 254.0,355.2 250.8,355.4 247.6,356.1 244.4,357.5 241.2,358.9 238.0,359.6 234.9,360.9 231.7,361.5 228.5,363.0 225.3,364.1 222.1,364.8 218.9,365.9 215.7,366.4 212.5,367.7 209.4,369.5 206.2,370.9 203.0,372.7 199.8,374.5 196.6,376.0 193.4,376.9 190.2,378.4 187.0,379.7 183.8,379.9 180.7,381.9 177.5,383.1 174.3,384.3 171.1,383.9 167.9,384.9 164.7,385.5 161.5,385.9 158.3,387.3 155.2,387.8 152.0,388.2 148.8,388.9 145.6,388.7 142.4,389.0 139.2,390.2 136.0,390.1 132.8,389.8 129.6,391.0 126.5,390.5 123.3,391.0 120.1,391.6 116.9,392.0 113.7,391.6 110.5,392.8 107.3,392.2 104.1,392.9 101.0,393.3 97.8,392.9 94.6,393.3 91.4,393.1 88.2,393.5 85.0,393.7 81.8,393.0 78.6,393.2 75.4,393.3 72.3,393.8 69.1,393.8 65.9,393.5 62.7,392.8 59.5,392.8 56.3,392.9 53.1,393.6 49.9,392.6 46.8,393.0 43.6,393.1 40.4,392.5 37.2,393.0 34.0,392.9" fill="#dd8452" fill-opacity="0.37"/>
<text transform="translate(347.10,375.50) rotate(-90) scale(0.863,1)" fill="#5676a8" font-size="8.5">BDS B3I, GAL E5B</text>
<text transform="translate(476.70,379.00) rotate(-90) scale(0.863,1)" fill="#5676a8" font-size="8.5">GPS/QZSS L2C</text>
<text transform="translate(574.20,379.00) rotate(-90) scale(0.863,1)" fill="#5676a8" font-size="8.5">GLO L2OF (-7)</text>
<text transform="translate(610.20,379.00) rotate(-90) scale(0.863,1)" fill="#5676a8" font-size="8.5">GLO L2OF (+6)</text>
<polyline points="34.0,391.0 37.2,368.0 40.4,372.8 43.6,391.7 46.8,371.7 49.9,371.5 53.1,391.1 56.3,370.6 59.5,370.4 62.7,371.8 65.9,391.8 69.1,374.5 72.3,371.8 75.4,390.8 78.6,371.1 81.8,372.6 85.0,391.7 88.2,366.9 91.4,369.0 94.6,390.6 97.8,371.3 101.0,365.6 104.1,364.9 107.3,390.5 110.5,363.3 113.7,370.3 116.9,389.6 120.1,364.2 123.3,387.8 126.5,372.0 129.6,365.0 132.8,387.4 136.0,365.6 139.2,364.7 142.4,386.3 145.6,366.6 148.8,359.5 152.0,386.7 155.2,363.4 158.3,360.5 161.5,384.7 164.7,364.7 167.9,371.4 171.1,368.5 174.3,382.4 177.5,360.7 180.7,379.9 183.8,360.1 187.0,360.0 190.2,376.9 193.4,353.5 196.6,357.0 199.8,373.2 203.0,357.7 206.2,356.2 209.4,368.3 212.5,350.8 215.7,350.8 218.9,364.1 222.1,351.8 225.3,347.2 228.5,361.5 231.7,347.5 234.9,347.4 238.0,358.0 241.2,344.8 244.4,356.3 247.6,343.4 250.8,340.9 254.0,342.3 257.2,352.1 260.4,340.9 263.6,351.0 266.7,339.7 269.9,350.4 273.1,339.7 276.3,350.8 279.5,335.9 282.7,334.1 285.9,350.8 289.1,334.8 292.2,342.4 295.4,337.2 298.6,349.9 301.8,339.7 305.0,336.9 308.2,350.8 311.4,340.5 314.6,350.3 317.8,339.3 320.9,340.9 324.1,351.3 327.3,338.7 330.5,351.4 333.7,336.7 336.9,350.1 340.1,336.1 343.3,350.2 346.4,337.7 349.6,336.2 352.8,349.7 356.0,341.6 359.2,334.5 362.4,332.3 365.6,349.1 368.8,327.7 372.0,329.0 375.1,350.6 378.3,330.8 381.5,348.6 384.7,326.4 387.9,347.6 391.1,325.8 394.3,323.2 397.5,344.0 400.6,319.4 403.8,343.7 407.0,318.1 410.2,315.9 413.4,345.0 416.6,314.5 419.8,328.5 423.0,344.1 426.2,318.5 429.3,314.9 432.5,345.1 435.7,316.0 438.9,310.3 442.1,313.2 445.3,346.3 448.5,319.8 451.7,312.1 454.8,311.0 458.0,348.0 461.2,307.9 464.4,306.7 467.6,305.9 470.8,346.1 474.0,306.3 477.2,348.6 480.4,309.2 483.5,325.0 486.7,347.4 489.9,314.4 493.1,315.2 496.3,348.0 499.5,310.6 502.7,309.4 505.9,313.4 509.0,348.1 512.2,313.8 515.4,347.8 518.6,324.7 521.8,310.6 525.0,346.1 528.2,316.3 531.4,314.3 534.6,350.8 537.7,310.9 540.9,348.0 544.1,316.6 547.3,314.2 550.5,349.1 553.7,315.0 556.9,316.9 560.1,347.9 563.2,319.5 566.4,320.0 569.6,347.1 572.8,328.2 576.0,329.1 579.2,345.2 582.4,324.6 585.6,326.2 588.8,341.7 591.9,326.5 595.1,326.9 598.3,329.6 601.5,342.9 604.7,327.6 607.9,336.8 611.1,344.4 614.3,332.9 617.4,333.9 620.6,339.7 623.8,349.5 627.0,340.8 630.2,339.2 633.4,351.5 636.6,345.7 639.8,355.4 643.0,344.8 646.1,350.6 649.3,352.5 652.5,364.7 655.7,357.0 658.9,358.9 662.1,367.9 665.3,355.0 668.5,370.4 671.6,364.7 674.8,355.4 678.0,362.1 681.2,374.3 684.4,361.8 687.6,357.6 690.8,377.4 694.0,356.5 697.2,378.3 700.3,357.7 703.5,366.4 706.7,360.5 709.9,381.7 713.1,358.4 716.3,364.3 719.5,382.7 722.7,366.2 725.8,368.2 729.0,384.4 732.2,373.6 735.4,371.3 738.6,385.0 741.8,360.5 745.0,386.1 748.2,365.4 751.4,387.0 754.5,362.8 757.7,367.4 760.9,386.9 764.1,365.2 767.3,388.6 770.5,368.1 773.7,363.5 776.9,387.5 780.0,366.2 783.2,369.0 786.4,390.9 789.6,367.4 792.8,367.8 796.0,375.8 799.2,390.4 802.4,367.4 805.6,368.4 808.7,370.5 811.9,390.3 815.1,372.1 818.3,368.8 821.5,369.8 824.7,390.2 827.9,373.5 831.1,376.6 834.2,391.4 837.4,371.0 840.6,368.6 843.8,390.9 847.0,368.5" fill="none" stroke="#ec8a50" stroke-width="1.4" stroke-linejoin="round"/>
<polyline points="34.0,374.8 37.2,375.6 40.4,376.4 40.6,376.4 43.6,380.3 46.4,383.9 46.8,383.3 49.9,378.4 52.2,374.8 53.1,374.9 56.3,375.2 59.5,375.5 60.5,375.6 62.7,375.0 65.9,374.2 67.2,373.9 69.1,374.4 72.3,375.2 73.8,375.6 75.4,377.2 77.9,379.8 78.6,378.8 81.8,374.3 82.1,373.9 85.0,373.3 88.2,372.7 90.4,372.3 91.4,372.3 94.6,372.3 97.8,372.3 100.3,372.3 101.0,372.5 104.1,373.5 105.3,373.9 107.3,377.5 109.5,381.4 110.5,378.6 113.6,369.8 113.7,369.8 116.9,369.8 120.1,369.8 120.2,369.8 123.3,371.1 126.0,372.3 126.5,371.9 129.6,369.5 130.2,369.0 132.8,369.0 136.0,369.0 138.5,369.0 139.2,369.6 142.4,372.1 142.6,372.3 145.6,369.9 146.8,369.0 148.8,368.0 152.0,366.4 153.4,365.7 155.2,365.7 158.3,365.7 161.5,365.7 163.4,365.7 164.7,367.2 167.9,370.7 170.0,373.1 171.1,370.9 174.3,364.6 175.0,363.2 177.5,362.9 180.7,362.6 183.3,362.3 183.8,362.2 187.0,361.2 190.2,360.3 191.5,359.9 193.4,360.4 196.6,361.1 199.8,361.9 201.5,362.3 203.0,360.6 206.2,356.8 206.5,356.5 209.4,355.5 212.5,354.5 215.7,353.4 216.4,353.2 218.9,352.9 222.1,352.4 225.3,352.0 228.0,351.6 228.5,351.8 231.7,353.0 234.0,353.9 234.9,352.7 238.0,348.6 239.0,347.3 241.2,346.5 244.4,345.3 245.6,344.8 247.6,344.4 250.8,343.7 252.2,343.4 254.0,342.9 257.2,342.0 258.9,341.5 260.4,342.2 263.6,343.9 265.5,344.8 266.7,344.0 269.9,341.9 270.5,341.5 273.1,340.8 276.3,340.0 277.1,339.8 279.5,338.0 282.7,335.6 283.8,334.8 285.9,336.9 288.7,339.8 289.1,340.0 292.2,342.0 294.5,343.4 295.4,342.8 298.6,340.9 300.3,339.8 301.8,339.9 305.0,340.0 308.2,340.1 308.6,340.1 311.4,340.0 314.6,339.9 316.9,339.8 317.8,340.0 320.9,340.8 321.9,341.1 324.1,342.0 327.3,343.4 328.5,343.9 330.5,342.7 333.7,340.8 336.8,339.0 336.9,339.0 340.1,339.6 343.3,340.3 345.1,340.6 346.4,340.3 349.6,339.5 351.7,339.0 352.8,339.9 356.0,342.6 357.5,343.9 359.2,340.6 361.7,335.7 362.4,335.3 365.6,333.7 368.8,332.1 370.0,331.5 372.0,331.7 375.1,332.1 376.6,332.3 378.3,331.1 381.5,328.7 383.3,327.4 384.7,328.8 387.9,332.0 389.1,333.2 391.1,329.9 393.2,326.5 394.3,326.1 397.5,324.9 399.8,324.0 400.6,323.7 403.8,322.6 406.5,321.6 407.0,321.5 410.2,321.2 413.4,320.9 414.8,320.7 416.6,323.5 419.7,328.2 419.8,328.0 423.0,321.1 424.7,317.4 426.2,318.0 428.7,319.1 429.3,319.3 432.5,320.2 434.0,320.7 435.7,317.7 437.3,314.9 438.9,315.4 442.1,316.4 442.3,316.5 445.3,315.9 446.4,315.7 448.5,319.0 450.6,322.3 451.7,321.0 454.8,317.4 455.6,316.5 458.0,313.3 460.5,309.9 461.2,309.9 464.4,309.7 467.2,309.6 467.6,309.5 470.8,309.1 473.8,308.6 474.0,308.7 477.1,310.7 477.2,311.0 480.4,320.1 483.5,328.9 483.8,329.8 486.7,324.4 488.7,320.7 489.9,319.7 493.1,317.0 493.7,316.5 496.3,318.9 497.0,319.5 499.5,316.0 500.3,314.9 502.7,317.2 503.7,318.2 505.9,315.6 508.6,312.4 509.0,313.3 512.2,320.4 515.4,327.5 516.1,329.0 518.6,323.6 521.8,316.7 521.9,316.5 525.0,316.0 526.9,315.7 528.2,315.8 531.4,316.1 534.6,316.3 536.8,316.5 537.7,317.9 540.9,322.8 544.1,327.8 544.3,328.1 547.3,323.9 550.1,319.9 550.5,319.7 553.7,317.7 554.2,317.4 556.9,322.1 557.5,323.2 560.1,321.7 563.2,320.0 563.4,319.9 566.4,322.9 568.3,324.8 569.6,325.8 572.8,328.2 575.0,329.8 576.0,329.8 579.2,329.6 581.6,329.5 582.4,329.3 585.6,328.3 588.8,327.4 589.1,327.3 591.9,329.9 593.2,331.1 595.1,331.6 598.2,332.3 598.3,331.8 601.5,317.1 601.8,315.7 604.7,328.4 607.3,339.8 607.9,339.2 611.1,336.0 614.3,332.8 614.8,332.3 617.4,335.4 620.6,339.3 623.0,342.2 623.8,342.7 627.0,344.7 629.7,346.4 630.2,346.3 633.4,345.7 634.0,345.6 636.6,347.7 639.8,350.2 643.0,352.8 643.5,353.2 646.1,354.2 649.3,355.5 652.5,356.8 653.0,357.0 655.7,358.1 658.9,359.4 662.1,360.7 662.4,360.8 665.3,362.0 668.5,363.2 671.6,364.5 671.9,364.6 674.8,363.5 678.0,362.3 679.5,361.7 681.2,362.1 684.4,362.9 687.1,363.6 687.6,363.7 690.8,364.2 694.0,364.7 696.6,365.1 697.2,365.2 700.3,365.6 703.5,366.1 706.1,366.5 706.7,366.4 709.9,366.0 713.1,365.6 713.6,365.5 716.3,365.5 719.5,365.5 722.7,365.5 723.1,365.5 725.8,367.3 728.8,369.3 729.0,369.5 732.2,373.2 734.5,375.9 735.4,374.6 738.6,369.8 740.2,367.4 741.8,367.1 745.0,366.6 745.9,366.5 748.2,368.0 751.4,370.1 751.6,370.2 754.5,368.8 757.2,367.4 757.7,367.7 760.9,369.7 764.1,371.7 764.8,372.1 767.3,371.6 770.5,371.0 773.7,370.3 774.3,370.2 776.9,370.3 780.0,370.5 783.2,370.7 785.7,370.8 786.4,371.5 789.6,374.5 792.8,377.5 795.2,379.7 796.0,378.9 799.2,375.7 802.4,372.5 802.8,372.1 805.6,372.1 808.7,372.1 810.3,372.1 811.9,373.2 815.1,375.3 816.0,375.9 818.3,375.6 821.5,375.2 823.6,375.0 824.7,375.1 827.9,375.3 831.1,375.6 834.2,375.8 835.0,375.9 837.4,375.7 840.6,375.4 843.8,375.2 846.0,375.0 847.0,375.0" fill="none" stroke="#52ad62" stroke-width="1.4" stroke-linejoin="round"/>
</g>
<rect x="34.00" y="254" width="1" height="143.00" fill="#3e3e43"/>
<rect x="34.00" y="396.00" width="813.00" height="1" fill="#3e3e43"/>
<rect x="40.50" y="260.50" width="32" height="14" fill="#2a2a2d" stroke="#505056" stroke-width="1"/>
<rect x="44.40" y="264.00" width="6.6" height="7" fill="#55a868"/>
<text transform="translate(52.00,271.00) scale(0.863,1)" fill="#d6d6d6" font-size="8.5">Mean</text>
<text transform="translate(1048.80,11.00) scale(0.863,1)" fill="#a4a4a4" font-size="8.5">Name:</text>
<text transform="translate(1149.80,11.00) scale(0.863,1)" fill="#a4a4a4" font-size="8.5">Type:</text>
<text transform="translate(1189.50,11.00) scale(0.863,1)" fill="#a4a4a4" font-size="8.5">Source:</text>
<text transform="translate(1229.00,11.00) scale(0.863,1)" fill="#a4a4a4" font-size="8.5">Seq:</text>
<text transform="translate(1255.40,11.00) scale(0.863,1)" fill="#a4a4a4" font-size="8.5">Cnt:</text>
<text transform="translate(1281.70,11.00) scale(0.863,1)" fill="#a4a4a4" font-size="8.5">Age:</text>
<text transform="translate(1308.10,11.00) scale(0.863,1)" fill="#a4a4a4" font-size="8.5">Rate:</text>
<text transform="translate(1334.40,11.00) scale(0.863,1)" fill="#a4a4a4" font-size="8.5">Size:</text>
<text transform="translate(1048.80,22.00) scale(0.863,1)" fill="#d6d6d6" font-size="8.5">UBX-MON-SPAN</text>
<text transform="translate(1149.80,22.00) scale(0.863,1)" fill="#d6d6d6" font-size="8.5">UBX</text>
<text transform="translate(1189.50,22.00) scale(0.863,1)" fill="#d6d6d6" font-size="8.5">LOG</text>
<text transform="translate(1251.60,22.00) scale(0.863,1)" fill="#d6d6d6" font-size="8.5" text-anchor="end">2232</text>
<text transform="translate(1277.90,22.00) scale(0.863,1)" fill="#d6d6d6" font-size="8.5" text-anchor="end">26</text>
<text transform="translate(1300.30,22.00) scale(0.863,1)" fill="#d6d6d6" font-size="8.5">-</text>
<text transform="translate(1326.70,22.00) scale(0.863,1)" fill="#d6d6d6" font-size="8.5">-</text>
<text transform="translate(1357.60,22.00) scale(0.863,1)" fill="#d6d6d6" font-size="8.5" text-anchor="end">556</text>
<rect x="1049.2" y="26" width="868.8" height="1" fill="#33343a"/>
<path d="M1049.2,41 V31 q0,-2 2,-2 H1065.8 q2,0 2,2 V41 Z" fill="#8a1a45"/>
<text transform="translate(1051.60,38.00) scale(0.863,1)" fill="#f0f0f0" font-size="8.5">All</text>
<path d="M1070.4,41 V31 q0,-2 2,-2 H1161.8 q2,0 2,2 V41 Z" fill="#2c5490"/>
<text transform="translate(1072.80,38.00) scale(0.863,1)" fill="#f0f0f0" font-size="8.5">RF0 (1583.461250MHz)</text>
<path d="M1166.3,41 V31 q0,-2 2,-2 H1258.0 q2,0 2,2 V41 Z" fill="#2c5490"/>
<text transform="translate(1168.70,38.00) scale(0.863,1)" fill="#f0f0f0" font-size="8.5">RF1 (1224.006250MHz)</text>
<rect x="1049.2" y="40" width="868.8" height="1" fill="#8c1744" fill-opacity="0.62"/>
<text transform="translate(1495.00,57.10) scale(0.863,1)" fill="#d6d6d6" font-size="8.5" text-anchor="middle">RF0 (PGA 36dB)</text>
<rect x="1078.00" y="61" width="834.00" height="142.00" fill="#111112"/>
<rect x="1078" y="190" width="834.00" height="1" fill="#1b1b1e"/>
<rect x="1078" y="190" width="4" height="1" fill="#3e3e43"/>
<text transform="translate(1076.80,193.30) scale(0.863,1)" fill="#d6d6d6" font-size="8.5" text-anchor="end">10</text>
<rect x="1078" y="176" width="834.00" height="1" fill="#1b1b1e"/>
<rect x="1078" y="176" width="4" height="1" fill="#3e3e43"/>
<text transform="translate(1076.80,179.30) scale(0.863,1)" fill="#d6d6d6" font-size="8.5" text-anchor="end">20</text>
<rect x="1078" y="161" width="834.00" height="1" fill="#1b1b1e"/>
<rect x="1078" y="161" width="4" height="1" fill="#3e3e43"/>
<text transform="translate(1076.80,164.30) scale(0.863,1)" fill="#d6d6d6" font-size="8.5" text-anchor="end">30</text>
<rect x="1078" y="147" width="834.00" height="1" fill="#1b1b1e"/>
<rect x="1078" y="147" width="4" height="1" fill="#3e3e43"/>
<text transform="translate(1076.80,150.30) scale(0.863,1)" fill="#d6d6d6" font-size="8.5" text-anchor="end">40</text>
<rect x="1078" y="132" width="834.00" height="1" fill="#1b1b1e"/>
<rect x="1078" y="132" width="4" height="1" fill="#3e3e43"/>
<text transform="translate(1076.80,135.30) scale(0.863,1)" fill="#d6d6d6" font-size="8.5" text-anchor="end">50</text>
<rect x="1078" y="118" width="834.00" height="1" fill="#1b1b1e"/>
<rect x="1078" y="118" width="4" height="1" fill="#3e3e43"/>
<text transform="translate(1076.80,121.30) scale(0.863,1)" fill="#d6d6d6" font-size="8.5" text-anchor="end">60</text>
<rect x="1078" y="103" width="834.00" height="1" fill="#1b1b1e"/>
<rect x="1078" y="103" width="4" height="1" fill="#3e3e43"/>
<text transform="translate(1076.80,106.30) scale(0.863,1)" fill="#d6d6d6" font-size="8.5" text-anchor="end">70</text>
<rect x="1078" y="89" width="834.00" height="1" fill="#1b1b1e"/>
<rect x="1078" y="89" width="4" height="1" fill="#3e3e43"/>
<text transform="translate(1076.80,92.30) scale(0.863,1)" fill="#d6d6d6" font-size="8.5" text-anchor="end">80</text>
<rect x="1078" y="74" width="834.00" height="1" fill="#1b1b1e"/>
<rect x="1078" y="74" width="4" height="1" fill="#3e3e43"/>
<text transform="translate(1076.80,77.30) scale(0.863,1)" fill="#d6d6d6" font-size="8.5" text-anchor="end">90</text>
<rect x="1104" y="61" width="1" height="142.00" fill="#1b1b1e"/>
<rect x="1104" y="199.00" width="1" height="4" fill="#3e3e43"/>
<text transform="translate(1104.30,213.75) scale(0.863,1)" fill="#d6d6d6" font-size="8.5" text-anchor="middle">-60</text>
<rect x="1169" y="61" width="1" height="142.00" fill="#1b1b1e"/>
<rect x="1169" y="199.00" width="1" height="4" fill="#3e3e43"/>
<text transform="translate(1169.30,213.75) scale(0.863,1)" fill="#d6d6d6" font-size="8.5" text-anchor="middle">-50</text>
<rect x="1234" y="61" width="1" height="142.00" fill="#1b1b1e"/>
<rect x="1234" y="199.00" width="1" height="4" fill="#3e3e43"/>
<text transform="translate(1234.30,213.75) scale(0.863,1)" fill="#d6d6d6" font-size="8.5" text-anchor="middle">-40</text>
<rect x="1299" y="61" width="1" height="142.00" fill="#1b1b1e"/>
<rect x="1299" y="199.00" width="1" height="4" fill="#3e3e43"/>
<text transform="translate(1299.30,213.75) scale(0.863,1)" fill="#d6d6d6" font-size="8.5" text-anchor="middle">-30</text>
<rect x="1365" y="61" width="1" height="142.00" fill="#1b1b1e"/>
<rect x="1365" y="199.00" width="1" height="4" fill="#3e3e43"/>
<text transform="translate(1365.30,213.75) scale(0.863,1)" fill="#d6d6d6" font-size="8.5" text-anchor="middle">-20</text>
<rect x="1430" y="61" width="1" height="142.00" fill="#1b1b1e"/>
<rect x="1430" y="199.00" width="1" height="4" fill="#3e3e43"/>
<text transform="translate(1430.30,213.75) scale(0.863,1)" fill="#d6d6d6" font-size="8.5" text-anchor="middle">-10</text>
<rect x="1495" y="61" width="1" height="142.00" fill="#3a3a3c"/>
<rect x="1495" y="199.00" width="1" height="4" fill="#3e3e43"/>
<text transform="translate(1496.40,213.75) scale(0.863,1)" fill="#d6d6d6" font-size="8.5" text-anchor="middle">0</text>
<rect x="1560" y="61" width="1" height="142.00" fill="#1b1b1e"/>
<rect x="1560" y="199.00" width="1" height="4" fill="#3e3e43"/>
<text transform="translate(1561.40,213.75) scale(0.863,1)" fill="#d6d6d6" font-size="8.5" text-anchor="middle">10</text>
<rect x="1625" y="61" width="1" height="142.00" fill="#1b1b1e"/>
<rect x="1625" y="199.00" width="1" height="4" fill="#3e3e43"/>
<text transform="translate(1626.40,213.75) scale(0.863,1)" fill="#d6d6d6" font-size="8.5" text-anchor="middle">20</text>
<rect x="1691" y="61" width="1" height="142.00" fill="#1b1b1e"/>
<rect x="1691" y="199.00" width="1" height="4" fill="#3e3e43"/>
<text transform="translate(1692.40,213.75) scale(0.863,1)" fill="#d6d6d6" font-size="8.5" text-anchor="middle">30</text>
<rect x="1756" y="61" width="1" height="142.00" fill="#1b1b1e"/>
<rect x="1756" y="199.00" width="1" height="4" fill="#3e3e43"/>
<text transform="translate(1757.40,213.75) scale(0.863,1)" fill="#d6d6d6" font-size="8.5" text-anchor="middle">40</text>
<rect x="1821" y="61" width="1" height="142.00" fill="#1b1b1e"/>
<rect x="1821" y="199.00" width="1" height="4" fill="#3e3e43"/>
<text transform="translate(1822.40,213.75) scale(0.863,1)" fill="#d6d6d6" font-size="8.5" text-anchor="middle">50</text>
<rect x="1886" y="61" width="1" height="142.00" fill="#1b1b1e"/>
<rect x="1886" y="199.00" width="1" height="4" fill="#3e3e43"/>
<text transform="translate(1887.40,213.75) scale(0.863,1)" fill="#d6d6d6" font-size="8.5" text-anchor="middle">60</text>
<text transform="translate(1495.00,225.75) scale(0.863,1)" fill="#d6d6d6" font-size="8.5" text-anchor="middle">Frequency (center 1583.461250MHz)</text>
<text transform="translate(1062.60,131.50) rotate(-90) scale(0.863,1)" fill="#d6d6d6" font-size="8.5" text-anchor="middle">Amplitude</text>
<clipPath id="c1045_61"><rect x="1078.00" y="61" width="834.00" height="142.00"/></clipPath>
<g clip-path="url(#c1045_61)">
<rect x="1349" y="61" width="2" height="142.00" fill="#3f6196"/>
<rect x="1442" y="61" width="2" height="142.00" fill="#3f6196"/>
<rect x="1589" y="61" width="2" height="142.00" fill="#3f6196"/>
<rect x="1637" y="61" width="2" height="142.00" fill="#3f6196"/>
<polygon points="1078.0,177.3 1081.3,177.1 1084.5,177.2 1087.8,177.3 1091.1,176.8 1094.6,176.7 1097.6,176.7 1101.7,176.4 1104.2,176.7 1107.4,176.8 1110.7,176.3 1114.0,176.0 1117.2,176.5 1120.5,176.0 1123.8,175.8 1125.4,176.3 1127.1,176.0 1130.3,175.9 1133.6,176.0 1136.9,176.1 1140.1,176.0 1143.4,175.6 1146.7,175.5 1149.1,175.7 1153.2,175.0 1156.5,173.6 1159.8,172.9 1163.3,172.4 1166.3,171.3 1169.6,170.2 1172.8,169.3 1176.1,168.7 1179.4,167.8 1182.3,167.0 1185.9,166.3 1189.4,165.5 1192.5,164.7 1196.5,163.3 1199.0,163.0 1202.3,162.0 1205.6,162.0 1208.4,161.8 1212.1,161.9 1215.5,161.7 1218.6,160.5 1221.9,160.6 1225.0,160.4 1228.4,159.6 1229.7,159.5 1231.7,160.0 1235.0,159.6 1236.8,159.8 1238.3,158.8 1241.5,157.0 1244.8,156.3 1248.1,154.9 1251.3,154.4 1254.6,154.1 1255.8,153.8 1257.9,153.4 1261.2,151.8 1264.4,151.0 1267.7,149.5 1270.0,148.9 1273.5,146.8 1277.1,144.6 1280.0,143.5 1284.0,141.3 1287.3,139.2 1289.5,136.3 1293.0,132.0 1297.1,131.0 1300.1,129.5 1303.7,126.7 1306.9,124.7 1310.2,121.9 1313.2,120.9 1316.1,122.1 1320.0,119.2 1321.5,119.0 1323.3,118.8 1326.6,117.9 1329.8,118.2 1333.1,117.3 1335.7,116.5 1339.6,115.6 1342.9,115.3 1345.2,115.4 1349.5,115.6 1351.1,115.9 1352.7,115.2 1355.2,114.9 1358.8,117.1 1362.5,117.8 1365.8,117.4 1369.1,117.1 1372.4,116.5 1374.8,116.4 1378.9,116.6 1382.2,117.4 1385.4,117.0 1388.7,117.3 1392.0,117.5 1395.2,117.4 1398.5,118.3 1401.8,118.3 1405.1,117.9 1408.3,117.8 1411.6,118.0 1414.9,118.4 1418.1,118.2 1422.2,118.2 1424.7,118.7 1426.9,118.3 1431.2,116.3 1435.2,114.3 1437.8,113.6 1441.0,113.9 1444.3,113.9 1445.9,114.5 1447.6,114.7 1450.6,116.4 1454.1,116.4 1457.4,116.8 1460.7,117.0 1463.9,116.3 1467.2,116.8 1469.6,116.2 1473.7,116.2 1477.0,116.1 1480.3,116.6 1483.6,116.3 1486.8,116.5 1490.1,115.8 1493.4,115.9 1495.0,116.1 1496.6,116.5 1498.6,117.0 1499.9,116.9 1503.2,117.4 1506.4,117.4 1510.4,118.1 1513.0,118.2 1516.3,118.8 1518.7,118.4 1522.8,118.6 1526.1,118.8 1529.3,118.2 1532.6,118.6 1536.5,118.5 1539.2,119.1 1542.4,119.7 1545.7,119.9 1549.0,121.0 1552.2,121.7 1554.2,121.7 1555.5,122.0 1558.8,121.6 1562.0,122.2 1565.3,121.5 1568.6,122.3 1571.9,121.6 1575.1,121.8 1577.9,122.1 1581.7,121.8 1584.9,121.8 1588.2,121.7 1591.5,121.6 1594.5,121.5 1598.0,113.7 1599.3,110.2 1601.3,115.6 1602.8,120.2 1604.6,121.4 1607.8,120.8 1611.1,121.3 1614.4,120.6 1617.6,120.8 1620.9,120.2 1624.2,120.8 1627.5,120.0 1631.3,120.4 1634.0,120.9 1637.2,121.6 1640.5,121.2 1643.8,121.6 1647.1,122.1 1650.4,122.0 1653.6,121.8 1656.9,122.5 1660.9,122.5 1663.4,123.3 1666.7,123.9 1670.0,124.0 1673.2,124.7 1676.5,125.7 1679.8,126.5 1682.2,127.2 1686.3,128.4 1689.6,130.0 1692.9,131.7 1696.4,133.3 1700.0,134.1 1702.7,135.4 1706.0,137.0 1709.2,138.8 1712.5,138.0 1715.4,136.0 1719.0,140.2 1722.3,146.6 1725.6,148.3 1728.8,151.0 1730.8,151.7 1732.1,153.0 1735.4,155.1 1738.7,155.2 1741.9,152.3 1746.2,163.0 1748.5,164.1 1751.7,165.8 1755.0,166.9 1758.6,167.9 1761.6,168.3 1764.8,168.8 1767.8,171.6 1771.4,172.2 1774.6,172.4 1777.9,172.6 1781.2,173.4 1784.4,173.3 1787.7,173.7 1791.0,173.3 1792.4,173.5 1794.3,173.1 1797.5,173.3 1800.8,173.5 1804.1,174.1 1807.3,174.0 1810.6,174.5 1813.9,174.4 1817.2,175.2 1820.4,174.7 1823.3,174.8 1827.0,175.3 1830.2,175.4 1833.5,175.5 1836.8,175.7 1840.0,176.2 1843.3,175.5 1846.6,176.3 1849.9,176.4 1854.1,176.6 1856.4,176.6 1859.7,176.2 1862.9,176.9 1866.2,176.9 1869.5,176.5 1872.8,177.0 1876.0,177.3 1879.3,176.9 1882.6,177.0 1884.9,177.1 1889.1,177.0 1892.4,177.6 1895.6,177.1 1898.9,177.3 1902.2,177.9 1905.5,177.9 1908.7,177.7 1912.0,177.8 1912.0,183.9 1908.7,183.8 1905.5,183.7 1902.2,183.7 1898.9,183.8 1895.6,183.3 1892.4,183.3 1889.1,183.2 1884.9,183.2 1882.6,183.3 1879.3,183.0 1876.0,183.2 1872.8,182.7 1869.5,182.6 1866.2,182.9 1862.9,182.7 1859.7,182.8 1856.4,182.5 1854.1,182.3 1849.9,182.1 1846.6,182.0 1843.3,182.2 1840.0,181.8 1836.8,181.6 1833.5,181.7 1830.2,181.6 1827.0,181.7 1823.3,181.3 1820.4,181.2 1817.2,180.8 1813.9,180.8 1810.6,180.5 1807.3,180.2 1804.1,180.2 1800.8,179.9 1797.5,179.9 1794.3,179.4 1792.4,179.1 1791.0,179.2 1787.7,178.3 1784.4,178.1 1781.2,177.6 1777.9,177.1 1774.6,177.0 1771.4,176.9 1767.8,176.0 1764.8,173.8 1761.6,172.7 1758.6,172.2 1755.0,171.7 1751.7,170.4 1748.5,169.1 1746.2,167.6 1741.9,164.7 1738.7,162.4 1735.4,160.2 1732.1,157.8 1730.8,156.8 1728.8,155.4 1725.6,153.4 1722.3,150.8 1719.0,148.9 1715.4,146.8 1712.5,145.4 1709.2,143.4 1706.0,141.7 1702.7,140.4 1700.0,138.9 1696.4,137.6 1692.9,136.4 1689.6,134.7 1686.3,133.1 1682.2,131.5 1679.8,131.0 1676.5,130.3 1673.2,129.6 1670.0,128.9 1666.7,128.2 1663.4,127.6 1660.9,127.0 1656.9,127.0 1653.6,126.9 1650.4,126.8 1647.1,126.4 1643.8,126.3 1640.5,126.0 1637.2,125.8 1634.0,125.4 1631.3,124.9 1627.5,124.9 1624.2,125.3 1620.9,125.2 1617.6,125.5 1614.4,125.7 1611.1,125.6 1607.8,125.8 1604.6,125.6 1602.8,123.4 1601.3,121.0 1599.3,119.1 1598.0,120.5 1594.5,124.4 1591.5,126.2 1588.2,126.3 1584.9,126.2 1581.7,126.6 1577.9,126.3 1575.1,126.6 1571.9,126.6 1568.6,126.4 1565.3,126.5 1562.0,126.4 1558.8,126.5 1555.5,126.5 1554.2,126.5 1552.2,126.3 1549.0,125.4 1545.7,124.8 1542.4,124.2 1539.2,123.5 1536.5,122.9 1532.6,123.1 1529.3,123.1 1526.1,123.2 1522.8,123.2 1518.7,123.3 1516.3,123.2 1513.0,122.8 1510.4,122.4 1506.4,122.2 1503.2,122.2 1499.9,121.8 1498.6,121.6 1496.6,121.2 1495.0,120.6 1493.4,121.0 1490.1,120.6 1486.8,121.1 1483.6,121.0 1480.3,121.1 1477.0,121.1 1473.7,121.3 1469.6,121.3 1467.2,121.4 1463.9,121.3 1460.7,121.4 1457.4,121.4 1454.1,121.3 1450.6,120.8 1447.6,119.4 1445.9,118.8 1444.3,118.2 1441.0,118.4 1437.8,118.5 1435.2,118.5 1431.2,120.5 1426.9,122.9 1424.7,123.0 1422.2,123.0 1418.1,122.7 1414.9,122.8 1411.6,123.0 1408.3,122.6 1405.1,122.6 1401.8,122.8 1398.5,122.5 1395.2,122.7 1392.0,122.2 1388.7,122.1 1385.4,121.9 1382.2,121.6 1378.9,121.7 1374.8,121.3 1372.4,121.2 1369.1,121.7 1365.8,121.8 1362.5,122.1 1358.8,121.4 1355.2,119.8 1352.7,120.1 1351.1,120.3 1349.5,120.3 1345.2,120.0 1342.9,120.1 1339.6,120.7 1335.7,121.1 1333.1,122.1 1329.8,122.7 1326.6,123.0 1323.3,123.3 1321.5,123.6 1320.0,123.7 1316.1,126.3 1313.2,125.8 1310.2,126.9 1306.9,129.2 1303.7,131.5 1300.1,134.0 1297.1,135.1 1293.0,136.3 1289.5,140.1 1287.3,142.6 1284.0,145.0 1280.0,147.9 1277.1,149.7 1273.5,151.9 1270.0,154.5 1267.7,155.1 1264.4,156.3 1261.2,157.7 1257.9,158.6 1255.8,159.4 1254.6,159.9 1251.3,162.0 1248.1,164.0 1244.8,165.7 1241.5,167.4 1238.3,170.6 1236.8,171.6 1235.0,172.1 1231.7,172.4 1229.7,173.1 1228.4,173.4 1225.0,173.9 1221.9,174.4 1218.6,175.0 1215.5,175.2 1212.1,175.7 1208.4,175.6 1205.6,175.6 1202.3,175.9 1199.0,175.8 1196.5,175.6 1192.5,176.2 1189.4,176.4 1185.9,176.9 1182.3,177.2 1179.4,177.4 1176.1,178.1 1172.8,178.4 1169.6,178.5 1166.3,178.6 1163.3,179.3 1159.8,179.6 1156.5,180.0 1153.2,180.3 1149.1,180.8 1146.7,180.6 1143.4,180.7 1140.1,180.8 1136.9,181.0 1133.6,181.4 1130.3,181.7 1127.1,181.5 1125.4,181.7 1123.8,181.9 1120.5,181.9 1117.2,182.0 1114.0,182.4 1110.7,182.5 1107.4,182.2 1104.2,182.5 1101.7,182.5 1097.6,182.4 1094.6,182.8 1091.1,182.7 1087.8,182.6 1084.5,182.8 1081.3,182.7 1078.0,182.8" fill="#dd8452" fill-opacity="0.37"/>
<text transform="translate(1363.70,192.00) rotate(-90) scale(0.863,1)" fill="#5676a8" font-size="8.5">BDS B1I</text>
<text transform="translate(1456.70,162.00) rotate(-90) scale(0.863,1)" fill="#5676a8" font-size="8.5">GPS/SBAS L1CA, GAL E1, BDS B1C</text>
<text transform="translate(1604.10,187.50) rotate(-90) scale(0.863,1)" fill="#5676a8" font-size="8.5">GLO L1OF lo</text>
<text transform="translate(1651.60,187.50) rotate(-90) scale(0.863,1)" fill="#5676a8" font-size="8.5">GLO L1OF hi</text>
<polyline points="1078.0,178.1 1081.3,182.1 1084.5,181.4 1087.8,182.3 1091.1,180.9 1094.6,181.8 1097.6,178.4 1101.7,177.2 1104.2,181.9 1107.4,181.3 1110.7,178.7 1114.0,181.5 1117.2,180.8 1120.5,178.2 1123.8,179.7 1125.4,181.1 1127.1,179.0 1130.3,181.0 1133.6,177.6 1136.9,178.2 1140.1,179.4 1143.4,177.1 1146.7,177.4 1149.1,179.8 1153.2,177.4 1156.5,178.4 1159.8,174.8 1163.3,173.8 1166.3,174.6 1169.6,172.7 1172.8,177.8 1176.1,172.3 1179.4,173.4 1182.3,168.6 1185.9,171.9 1189.4,170.2 1192.5,170.6 1196.5,165.6 1199.0,166.1 1202.3,173.8 1205.6,168.5 1208.4,166.5 1212.1,165.5 1215.5,166.3 1218.6,165.6 1221.9,162.6 1225.0,171.9 1228.4,166.6 1229.7,163.2 1231.7,169.6 1235.0,162.1 1236.8,164.4 1238.3,168.6 1241.5,159.2 1244.8,161.2 1248.1,162.4 1251.3,160.6 1254.6,155.6 1255.8,156.3 1257.9,157.3 1261.2,154.8 1264.4,155.9 1267.7,151.6 1270.0,154.2 1273.5,147.3 1277.1,146.9 1280.0,146.0 1284.0,140.4 1287.3,138.8 1289.5,133.4 1293.0,135.7 1297.1,133.3 1300.1,131.4 1303.7,128.2 1306.9,127.5 1310.2,123.3 1313.2,124.6 1316.1,122.9 1320.0,121.7 1321.5,120.9 1323.3,120.0 1326.6,121.8 1329.8,120.2 1333.1,120.4 1335.7,119.2 1339.6,117.5 1342.9,117.4 1345.2,116.1 1349.5,116.8 1351.1,119.5 1352.7,117.0 1355.2,117.7 1358.8,118.1 1362.5,120.1 1365.8,119.1 1369.1,119.4 1372.4,118.2 1374.8,117.1 1378.9,118.4 1382.2,118.5 1385.4,118.0 1388.7,120.6 1392.0,119.1 1395.2,119.7 1398.5,121.9 1401.8,121.6 1405.1,121.8 1408.3,121.8 1411.6,119.0 1414.9,119.8 1418.1,118.7 1422.2,121.4 1424.7,121.5 1426.9,120.4 1431.2,118.1 1435.2,116.7 1437.8,116.8 1441.0,115.1 1444.3,117.3 1445.9,115.6 1447.6,117.6 1450.6,117.6 1454.1,117.3 1457.4,120.7 1460.7,120.0 1463.9,119.8 1467.2,117.3 1469.6,116.8 1473.7,117.4 1477.0,117.4 1480.3,118.0 1483.6,118.2 1486.8,117.0 1490.1,117.6 1493.4,119.0 1495.0,117.2 1496.6,120.2 1498.6,119.7 1499.9,120.4 1503.2,118.7 1506.4,119.6 1510.4,120.8 1513.0,119.9 1516.3,119.1 1518.7,122.3 1522.8,122.0 1526.1,120.2 1529.3,118.8 1532.6,122.2 1536.5,121.1 1539.2,119.6 1542.4,120.9 1545.7,120.8 1549.0,124.3 1552.2,122.8 1554.2,125.9 1555.5,125.2 1558.8,122.4 1562.0,125.0 1565.3,123.8 1568.6,125.2 1571.9,125.6 1575.1,123.4 1577.9,122.8 1581.7,126.0 1584.9,123.8 1588.2,125.7 1591.5,124.6 1594.5,124.1 1598.0,118.9 1599.3,115.3 1601.3,119.3 1602.8,121.1 1604.6,124.3 1607.8,123.2 1611.1,123.4 1614.4,125.0 1617.6,121.7 1620.9,123.9 1624.2,121.2 1627.5,123.4 1631.3,123.7 1634.0,122.2 1637.2,123.9 1640.5,125.6 1643.8,124.6 1647.1,124.4 1650.4,123.4 1653.6,122.5 1656.9,124.2 1660.9,124.5 1663.4,124.3 1666.7,125.3 1670.0,125.0 1673.2,128.1 1676.5,128.6 1679.8,127.6 1682.2,128.2 1686.3,130.9 1689.6,132.2 1692.9,135.7 1696.4,134.9 1700.0,135.8 1702.7,139.5 1706.0,138.0 1709.2,141.4 1712.5,141.5 1715.4,145.6 1719.0,146.8 1722.3,149.7 1725.6,149.5 1728.8,153.7 1730.8,154.7 1732.1,155.1 1735.4,158.8 1738.7,161.4 1741.9,155.8 1746.2,164.8 1748.5,166.2 1751.7,167.0 1755.0,167.6 1758.6,170.0 1761.6,168.4 1764.8,172.3 1767.8,173.8 1771.4,173.0 1774.6,174.0 1777.9,174.9 1781.2,174.9 1784.4,174.4 1787.7,174.4 1791.0,173.8 1792.4,178.7 1794.3,177.8 1797.5,174.3 1800.8,178.2 1804.1,179.7 1807.3,177.8 1810.6,175.6 1813.9,177.9 1817.2,177.9 1820.4,176.5 1823.3,178.8 1827.0,175.9 1830.2,180.8 1833.5,179.6 1836.8,179.6 1840.0,181.1 1843.3,180.1 1846.6,178.1 1849.9,178.2 1854.1,177.8 1856.4,177.2 1859.7,181.2 1862.9,181.5 1866.2,178.9 1869.5,178.2 1872.8,180.8 1876.0,182.0 1879.3,182.3 1882.6,178.5 1884.9,181.8 1889.1,182.1 1892.4,181.8 1895.6,179.7 1898.9,178.9 1902.2,182.5 1905.5,180.1 1908.7,180.4 1912.0,181.4" fill="none" stroke="#ec8a50" stroke-width="1.4" stroke-linejoin="round"/>
<polyline points="1078.0,180.9 1081.3,181.0 1084.5,181.1 1087.8,181.3 1091.1,181.4 1094.6,181.5 1097.6,179.7 1101.7,180.3 1104.2,180.2 1107.4,180.0 1110.7,179.8 1114.0,179.7 1117.2,179.5 1120.5,179.3 1123.8,179.2 1125.4,179.1 1127.1,179.0 1130.3,178.9 1133.6,178.8 1136.9,178.7 1140.1,178.5 1143.4,178.4 1146.7,178.3 1149.1,178.2 1153.2,177.4 1156.5,176.8 1159.8,176.2 1163.3,175.6 1166.3,175.6 1169.6,175.6 1172.8,175.6 1176.1,174.3 1179.4,173.0 1182.3,171.8 1185.9,171.6 1189.4,171.4 1192.5,171.7 1196.5,172.2 1199.0,171.8 1202.3,171.2 1205.6,170.7 1208.4,170.2 1212.1,169.6 1215.5,169.0 1218.6,169.7 1221.9,170.4 1225.0,171.1 1228.4,169.1 1229.7,168.4 1231.7,168.1 1235.0,167.6 1236.8,167.3 1238.3,166.0 1241.5,163.1 1244.8,161.7 1248.1,160.4 1251.3,159.1 1254.6,157.7 1255.8,157.2 1257.9,156.6 1261.2,155.6 1264.4,154.7 1267.7,153.7 1270.0,153.0 1273.5,147.3 1277.1,148.9 1280.0,146.2 1284.0,141.0 1287.3,136.7 1289.5,133.8 1293.0,134.4 1297.1,133.0 1300.1,132.0 1303.7,129.4 1306.9,127.1 1310.2,124.7 1313.2,122.5 1316.1,124.3 1320.0,121.7 1321.5,120.7 1323.3,120.7 1326.6,120.7 1329.8,120.7 1333.1,119.7 1335.7,119.0 1339.6,118.4 1342.9,117.9 1345.2,117.5 1349.5,118.2 1351.1,118.4 1352.7,117.8 1355.2,116.9 1358.8,120.1 1362.5,119.8 1365.8,119.6 1369.1,119.4 1372.4,119.2 1374.8,119.0 1378.9,119.2 1382.2,119.4 1385.4,119.6 1388.7,119.8 1392.0,120.0 1395.2,120.2 1398.5,120.4 1401.8,120.4 1405.1,120.5 1408.3,120.5 1411.6,120.6 1414.9,120.6 1418.1,120.6 1422.2,120.7 1424.7,120.9 1426.9,121.1 1431.2,118.5 1435.2,116.0 1437.8,116.0 1441.0,116.0 1444.3,116.0 1445.9,116.0 1447.6,117.1 1450.6,119.0 1454.1,119.0 1457.4,119.0 1460.7,119.0 1463.9,119.0 1467.2,119.0 1469.6,119.0 1473.7,118.9 1477.0,118.8 1480.3,118.7 1483.6,118.7 1486.8,118.6 1490.1,118.5 1493.4,118.4 1495.0,118.4 1496.6,118.9 1498.6,119.5 1499.9,119.6 1503.2,119.7 1506.4,119.9 1510.4,120.1 1513.0,120.4 1516.3,120.8 1518.7,121.1 1522.8,121.0 1526.1,120.9 1529.3,120.9 1532.6,120.8 1536.5,120.7 1539.2,121.2 1542.4,121.9 1545.7,122.6 1549.0,123.2 1552.2,123.9 1554.2,124.3 1555.5,124.3 1558.8,124.3 1562.0,124.3 1565.3,124.3 1568.6,124.3 1571.9,124.3 1575.1,124.3 1577.9,124.3 1581.7,124.2 1584.9,124.0 1588.2,123.9 1591.5,123.8 1594.5,123.7 1598.0,116.8 1599.3,114.2 1601.3,119.6 1602.8,123.7 1604.6,123.6 1607.8,123.5 1611.1,123.4 1614.4,123.2 1617.6,123.1 1620.9,122.9 1624.2,122.8 1627.5,122.7 1631.3,122.5 1634.0,123.0 1637.2,123.7 1640.5,123.9 1643.8,124.0 1647.1,124.2 1650.4,124.4 1653.6,124.5 1656.9,124.7 1660.9,124.9 1663.4,125.4 1666.7,126.0 1670.0,126.7 1673.2,127.3 1676.5,127.9 1679.8,128.5 1682.2,129.0 1686.3,130.9 1689.6,132.4 1692.9,133.9 1696.4,135.5 1700.0,136.6 1702.7,138.0 1706.0,139.6 1709.2,141.2 1712.5,142.8 1715.4,144.3 1719.0,146.6 1722.3,148.8 1725.6,150.9 1728.8,153.0 1730.8,154.3 1732.1,155.3 1735.4,157.7 1738.7,160.2 1741.9,162.6 1746.2,165.8 1748.5,166.8 1751.7,168.2 1755.0,169.6 1758.6,171.2 1761.6,168.9 1764.8,171.5 1767.8,174.0 1771.4,174.4 1774.6,174.7 1777.9,175.1 1781.2,175.4 1784.4,175.8 1787.7,176.1 1791.0,176.5 1792.4,176.6 1794.3,176.7 1797.5,176.9 1800.8,177.1 1804.1,177.4 1807.3,177.6 1810.6,177.8 1813.9,178.0 1817.2,178.2 1820.4,178.4 1823.3,178.6 1827.0,178.7 1830.2,178.8 1833.5,179.0 1836.8,179.1 1840.0,179.2 1843.3,179.3 1846.6,179.4 1849.9,179.5 1854.1,179.7 1856.4,179.8 1859.7,179.8 1862.9,179.9 1866.2,180.0 1869.5,180.1 1872.8,180.2 1876.0,180.3 1879.3,180.4 1882.6,180.4 1884.9,180.5 1889.1,180.6 1892.4,180.7 1895.6,180.8 1898.9,180.9 1902.2,180.9 1905.5,181.0 1908.7,181.1 1912.0,181.2" fill="none" stroke="#52ad62" stroke-width="1.4" stroke-linejoin="round"/>
</g>
<rect x="1078.00" y="61" width="1" height="143.00" fill="#3e3e43"/>
<rect x="1078.00" y="203.00" width="834.00" height="1" fill="#3e3e43"/>
<rect x="1085.50" y="68.20" width="32" height="14" fill="#2a2a2d" stroke="#505056" stroke-width="1"/>
<rect x="1089.40" y="71.70" width="6.6" height="7" fill="#55a868"/>
<text transform="translate(1097.00,78.70) scale(0.863,1)" fill="#d6d6d6" font-size="8.5">Mean</text>
<text transform="translate(1495.00,249.50) scale(0.863,1)" fill="#d6d6d6" font-size="8.5" text-anchor="middle">RF1 (PGA 9dB)</text>
<rect x="1078.00" y="254" width="834.00" height="142.00" fill="#111112"/>
<rect x="1078" y="383" width="834.00" height="1" fill="#1b1b1e"/>
<rect x="1078" y="383" width="4" height="1" fill="#3e3e43"/>
<text transform="translate(1076.80,386.30) scale(0.863,1)" fill="#d6d6d6" font-size="8.5" text-anchor="end">10</text>
<rect x="1078" y="369" width="834.00" height="1" fill="#1b1b1e"/>
<rect x="1078" y="369" width="4" height="1" fill="#3e3e43"/>
<text transform="translate(1076.80,372.30) scale(0.863,1)" fill="#d6d6d6" font-size="8.5" text-anchor="end">20</text>
<rect x="1078" y="354" width="834.00" height="1" fill="#1b1b1e"/>
<rect x="1078" y="354" width="4" height="1" fill="#3e3e43"/>
<text transform="translate(1076.80,357.30) scale(0.863,1)" fill="#d6d6d6" font-size="8.5" text-anchor="end">30</text>
<rect x="1078" y="340" width="834.00" height="1" fill="#1b1b1e"/>
<rect x="1078" y="340" width="4" height="1" fill="#3e3e43"/>
<text transform="translate(1076.80,343.30) scale(0.863,1)" fill="#d6d6d6" font-size="8.5" text-anchor="end">40</text>
<rect x="1078" y="325" width="834.00" height="1" fill="#1b1b1e"/>
<rect x="1078" y="325" width="4" height="1" fill="#3e3e43"/>
<text transform="translate(1076.80,328.30) scale(0.863,1)" fill="#d6d6d6" font-size="8.5" text-anchor="end">50</text>
<rect x="1078" y="311" width="834.00" height="1" fill="#1b1b1e"/>
<rect x="1078" y="311" width="4" height="1" fill="#3e3e43"/>
<text transform="translate(1076.80,314.30) scale(0.863,1)" fill="#d6d6d6" font-size="8.5" text-anchor="end">60</text>
<rect x="1078" y="296" width="834.00" height="1" fill="#1b1b1e"/>
<rect x="1078" y="296" width="4" height="1" fill="#3e3e43"/>
<text transform="translate(1076.80,299.30) scale(0.863,1)" fill="#d6d6d6" font-size="8.5" text-anchor="end">70</text>
<rect x="1078" y="282" width="834.00" height="1" fill="#1b1b1e"/>
<rect x="1078" y="282" width="4" height="1" fill="#3e3e43"/>
<text transform="translate(1076.80,285.30) scale(0.863,1)" fill="#d6d6d6" font-size="8.5" text-anchor="end">80</text>
<rect x="1078" y="267" width="834.00" height="1" fill="#1b1b1e"/>
<rect x="1078" y="267" width="4" height="1" fill="#3e3e43"/>
<text transform="translate(1076.80,270.30) scale(0.863,1)" fill="#d6d6d6" font-size="8.5" text-anchor="end">90</text>
<rect x="1104" y="254" width="1" height="142.00" fill="#1b1b1e"/>
<rect x="1104" y="392.00" width="1" height="4" fill="#3e3e43"/>
<text transform="translate(1104.30,406.75) scale(0.863,1)" fill="#d6d6d6" font-size="8.5" text-anchor="middle">-60</text>
<rect x="1169" y="254" width="1" height="142.00" fill="#1b1b1e"/>
<rect x="1169" y="392.00" width="1" height="4" fill="#3e3e43"/>
<text transform="translate(1169.30,406.75) scale(0.863,1)" fill="#d6d6d6" font-size="8.5" text-anchor="middle">-50</text>
<rect x="1234" y="254" width="1" height="142.00" fill="#1b1b1e"/>
<rect x="1234" y="392.00" width="1" height="4" fill="#3e3e43"/>
<text transform="translate(1234.30,406.75) scale(0.863,1)" fill="#d6d6d6" font-size="8.5" text-anchor="middle">-40</text>
<rect x="1299" y="254" width="1" height="142.00" fill="#1b1b1e"/>
<rect x="1299" y="392.00" width="1" height="4" fill="#3e3e43"/>
<text transform="translate(1299.30,406.75) scale(0.863,1)" fill="#d6d6d6" font-size="8.5" text-anchor="middle">-30</text>
<rect x="1365" y="254" width="1" height="142.00" fill="#1b1b1e"/>
<rect x="1365" y="392.00" width="1" height="4" fill="#3e3e43"/>
<text transform="translate(1365.30,406.75) scale(0.863,1)" fill="#d6d6d6" font-size="8.5" text-anchor="middle">-20</text>
<rect x="1430" y="254" width="1" height="142.00" fill="#1b1b1e"/>
<rect x="1430" y="392.00" width="1" height="4" fill="#3e3e43"/>
<text transform="translate(1430.30,406.75) scale(0.863,1)" fill="#d6d6d6" font-size="8.5" text-anchor="middle">-10</text>
<rect x="1495" y="254" width="1" height="142.00" fill="#3a3a3c"/>
<rect x="1495" y="392.00" width="1" height="4" fill="#3e3e43"/>
<text transform="translate(1496.40,406.75) scale(0.863,1)" fill="#d6d6d6" font-size="8.5" text-anchor="middle">0</text>
<rect x="1560" y="254" width="1" height="142.00" fill="#1b1b1e"/>
<rect x="1560" y="392.00" width="1" height="4" fill="#3e3e43"/>
<text transform="translate(1561.40,406.75) scale(0.863,1)" fill="#d6d6d6" font-size="8.5" text-anchor="middle">10</text>
<rect x="1625" y="254" width="1" height="142.00" fill="#1b1b1e"/>
<rect x="1625" y="392.00" width="1" height="4" fill="#3e3e43"/>
<text transform="translate(1626.40,406.75) scale(0.863,1)" fill="#d6d6d6" font-size="8.5" text-anchor="middle">20</text>
<rect x="1691" y="254" width="1" height="142.00" fill="#1b1b1e"/>
<rect x="1691" y="392.00" width="1" height="4" fill="#3e3e43"/>
<text transform="translate(1692.40,406.75) scale(0.863,1)" fill="#d6d6d6" font-size="8.5" text-anchor="middle">30</text>
<rect x="1756" y="254" width="1" height="142.00" fill="#1b1b1e"/>
<rect x="1756" y="392.00" width="1" height="4" fill="#3e3e43"/>
<text transform="translate(1757.40,406.75) scale(0.863,1)" fill="#d6d6d6" font-size="8.5" text-anchor="middle">40</text>
<rect x="1821" y="254" width="1" height="142.00" fill="#1b1b1e"/>
<rect x="1821" y="392.00" width="1" height="4" fill="#3e3e43"/>
<text transform="translate(1822.40,406.75) scale(0.863,1)" fill="#d6d6d6" font-size="8.5" text-anchor="middle">50</text>
<rect x="1886" y="254" width="1" height="142.00" fill="#1b1b1e"/>
<rect x="1886" y="392.00" width="1" height="4" fill="#3e3e43"/>
<text transform="translate(1887.40,406.75) scale(0.863,1)" fill="#d6d6d6" font-size="8.5" text-anchor="middle">60</text>
<text transform="translate(1495.00,418.75) scale(0.863,1)" fill="#d6d6d6" font-size="8.5" text-anchor="middle">Frequency (center 1224.006250MHz)</text>
<text transform="translate(1062.60,324.50) rotate(-90) scale(0.863,1)" fill="#d6d6d6" font-size="8.5" text-anchor="middle">Amplitude</text>
<clipPath id="c1045_254"><rect x="1078.00" y="254" width="834.00" height="142.00"/></clipPath>
<g clip-path="url(#c1045_254)">
<rect x="1384" y="254" width="2" height="142.00" fill="#3f6196"/>
<rect x="1517" y="254" width="2" height="142.00" fill="#3f6196"/>
<rect x="1617" y="254" width="2" height="142.00" fill="#3f6196"/>
<rect x="1655" y="254" width="2" height="142.00" fill="#3f6196"/>
<polygon points="1078.0,358.1 1081.3,356.9 1084.5,361.5 1087.8,363.7 1091.1,362.5 1094.4,360.9 1097.6,359.9 1100.9,358.8 1104.2,358.1 1107.4,358.2 1110.7,358.5 1114.0,359.3 1117.2,359.4 1120.5,359.2 1123.8,359.1 1127.1,358.6 1130.3,359.2 1133.6,359.1 1136.9,359.1 1140.1,359.5 1143.4,360.2 1146.7,361.0 1150.0,360.7 1153.2,359.6 1156.5,359.7 1159.8,358.7 1163.0,358.2 1166.3,357.0 1169.6,357.1 1172.8,357.3 1176.1,357.1 1179.4,356.7 1182.7,356.4 1185.9,356.6 1189.2,356.5 1192.5,356.1 1195.7,355.4 1199.0,354.7 1202.3,355.1 1205.6,355.5 1208.8,355.8 1212.1,355.2 1215.4,355.0 1218.6,355.1 1221.9,355.5 1225.2,355.3 1228.4,354.9 1231.7,353.7 1235.0,353.0 1238.3,352.4 1241.5,352.2 1244.8,351.9 1248.1,351.6 1251.3,351.3 1254.6,351.8 1257.9,351.3 1261.2,351.0 1264.4,350.3 1267.7,349.9 1271.0,349.1 1274.2,348.4 1277.5,347.9 1280.8,348.0 1284.0,347.6 1287.3,346.7 1290.6,346.5 1293.9,346.1 1297.1,345.7 1300.4,344.7 1303.7,344.2 1306.9,343.7 1310.2,343.2 1313.5,342.4 1316.8,342.6 1320.0,342.3 1323.3,342.3 1326.6,342.2 1329.8,342.5 1333.1,342.9 1336.4,342.3 1339.6,341.7 1342.9,341.7 1346.2,341.5 1349.5,341.5 1352.7,341.2 1356.0,341.2 1359.3,340.9 1362.5,340.1 1365.8,339.8 1369.1,339.5 1372.4,339.1 1375.6,339.2 1378.9,338.7 1382.2,338.7 1385.4,338.7 1388.7,338.9 1392.0,339.4 1395.2,339.0 1398.5,338.5 1401.8,338.0 1405.1,337.7 1408.3,337.8 1411.6,338.3 1414.9,338.0 1418.1,338.1 1421.4,336.6 1424.7,334.8 1428.0,333.4 1431.2,332.1 1434.5,330.8 1437.8,329.5 1441.0,327.7 1444.3,327.4 1447.6,325.5 1450.8,324.7 1454.1,323.0 1457.4,321.8 1460.7,320.2 1463.9,318.6 1467.2,317.6 1470.5,316.1 1473.7,314.8 1477.0,313.3 1480.3,311.6 1483.6,310.7 1486.8,309.1 1490.1,308.4 1493.4,307.1 1496.6,305.7 1499.9,304.5 1503.2,303.1 1506.4,302.0 1509.7,299.8 1513.0,298.6 1516.3,297.3 1519.5,297.1 1522.8,296.6 1526.1,296.5 1529.3,296.1 1532.6,296.2 1535.9,297.5 1539.2,299.9 1542.4,302.6 1545.7,304.2 1549.0,305.2 1552.2,304.9 1555.5,304.2 1558.8,304.1 1562.0,303.7 1565.3,304.2 1568.6,304.2 1571.9,303.8 1575.1,303.7 1578.4,304.4 1581.7,305.6 1584.9,306.4 1588.2,306.0 1591.5,306.2 1594.8,306.1 1598.0,307.4 1601.3,307.6 1604.6,308.6 1607.8,309.5 1611.1,310.1 1614.4,310.7 1617.6,310.8 1620.9,311.7 1624.2,312.2 1627.5,313.8 1630.7,315.1 1634.0,316.9 1637.3,317.2 1640.5,317.5 1643.8,317.7 1647.1,318.8 1650.4,320.2 1653.6,320.8 1656.9,320.8 1660.2,321.2 1663.4,322.5 1666.7,324.1 1670.0,324.6 1673.2,325.6 1676.5,325.8 1679.8,327.1 1683.1,328.5 1686.3,330.2 1689.6,331.8 1692.9,332.0 1696.1,332.8 1699.4,334.1 1702.7,336.0 1706.0,337.3 1709.2,338.0 1712.5,338.7 1715.8,339.8 1719.0,341.1 1722.3,342.8 1725.6,343.7 1728.8,344.1 1732.1,344.4 1735.4,344.8 1738.7,344.4 1741.9,344.7 1745.2,345.4 1748.5,346.1 1751.7,346.1 1755.0,346.4 1758.3,347.0 1761.6,347.4 1764.8,347.5 1768.1,347.9 1771.4,347.5 1774.6,347.5 1777.9,348.4 1781.2,349.3 1784.4,349.9 1787.7,349.4 1791.0,349.6 1794.3,350.1 1797.5,350.7 1800.8,351.5 1804.1,352.2 1807.3,352.3 1810.6,352.1 1813.9,351.7 1817.2,352.2 1820.4,353.1 1823.7,353.6 1827.0,353.9 1830.2,354.0 1833.5,354.5 1836.8,355.2 1840.0,355.5 1843.3,356.1 1846.6,356.7 1849.9,357.3 1853.1,357.7 1856.4,357.0 1859.7,357.2 1862.9,357.5 1866.2,358.6 1869.5,359.1 1872.8,359.2 1876.0,359.5 1879.3,359.9 1882.6,359.5 1885.8,359.3 1889.1,358.9 1892.4,359.4 1895.6,359.7 1898.9,360.1 1902.2,360.8 1905.5,360.9 1908.7,360.9 1912.0,360.8 1912.0,395.2 1908.7,395.3 1905.5,395.5 1902.2,395.0 1898.9,395.7 1895.6,395.3 1892.4,394.5 1889.1,395.6 1885.8,394.5 1882.6,394.8 1879.3,394.7 1876.0,394.6 1872.8,395.3 1869.5,394.5 1866.2,394.3 1862.9,394.4 1859.7,394.7 1856.4,394.8 1853.1,394.8 1849.9,394.4 1846.6,394.1 1843.3,394.0 1840.0,394.1 1836.8,394.0 1833.5,393.1 1830.2,393.4 1827.0,393.4 1823.7,392.9 1820.4,392.7 1817.2,391.8 1813.9,391.5 1810.6,391.4 1807.3,391.0 1804.1,390.8 1800.8,391.0 1797.5,390.8 1794.3,390.6 1791.0,389.3 1787.7,389.0 1784.4,389.2 1781.2,388.2 1777.9,387.5 1774.6,386.8 1771.4,386.7 1768.1,386.5 1764.8,385.3 1761.6,385.5 1758.3,384.4 1755.0,384.2 1751.7,383.0 1748.5,382.5 1745.2,381.1 1741.9,381.0 1738.7,379.3 1735.4,379.2 1732.1,377.0 1728.8,376.1 1725.6,375.5 1722.3,374.3 1719.0,373.6 1715.8,372.1 1712.5,372.0 1709.2,371.3 1706.0,369.7 1702.7,368.6 1699.4,368.9 1696.1,367.9 1692.9,366.8 1689.6,366.2 1686.3,364.6 1683.1,363.5 1679.8,363.3 1676.5,362.1 1673.2,361.8 1670.0,362.3 1666.7,361.4 1663.4,362.1 1660.2,360.8 1656.9,361.7 1653.6,360.5 1650.4,360.2 1647.1,360.3 1643.8,360.9 1640.5,360.6 1637.3,359.7 1634.0,360.4 1630.7,360.2 1627.5,359.6 1624.2,360.1 1620.9,359.2 1617.6,359.9 1614.4,359.4 1611.1,359.1 1607.8,359.2 1604.6,359.2 1601.3,358.4 1598.0,359.2 1594.8,358.6 1591.5,358.4 1588.2,358.3 1584.9,359.0 1581.7,358.9 1578.4,358.3 1575.1,359.0 1571.9,359.0 1568.6,358.2 1565.3,358.7 1562.0,358.3 1558.8,359.0 1555.5,358.0 1552.2,358.1 1549.0,358.0 1545.7,357.1 1542.4,356.9 1539.2,356.9 1535.9,356.4 1532.6,356.2 1529.3,355.9 1526.1,356.0 1522.8,355.9 1519.5,355.4 1516.3,354.3 1513.0,353.9 1509.7,353.1 1506.4,354.3 1503.2,353.9 1499.9,354.3 1496.6,353.8 1493.4,354.5 1490.1,353.4 1486.8,354.0 1483.6,353.0 1480.3,352.8 1477.0,352.8 1473.7,351.9 1470.5,351.8 1467.2,351.2 1463.9,351.4 1460.7,350.1 1457.4,351.2 1454.1,350.9 1450.8,351.6 1447.6,353.0 1444.3,353.3 1441.0,353.2 1437.8,353.7 1434.5,354.4 1431.2,355.3 1428.0,354.5 1424.7,355.2 1421.4,355.3 1418.1,354.9 1414.9,354.9 1411.6,354.7 1408.3,354.7 1405.1,355.4 1401.8,354.7 1398.5,355.5 1395.2,354.7 1392.0,355.1 1388.7,354.9 1385.4,354.6 1382.2,354.0 1378.9,354.1 1375.6,355.1 1372.4,354.7 1369.1,354.5 1365.8,354.8 1362.5,355.5 1359.3,355.3 1356.0,354.9 1352.7,355.5 1349.5,355.6 1346.2,355.6 1342.9,355.2 1339.6,355.9 1336.4,355.6 1333.1,356.1 1329.8,356.3 1326.6,356.5 1323.3,357.2 1320.0,357.8 1316.8,358.3 1313.5,359.4 1310.2,359.3 1306.9,360.9 1303.7,361.0 1300.4,361.8 1297.1,362.6 1293.9,363.7 1290.6,365.0 1287.3,365.6 1284.0,365.8 1280.8,367.7 1277.5,368.0 1274.2,369.4 1271.0,369.3 1267.7,370.8 1264.4,371.5 1261.2,372.9 1257.9,373.7 1254.6,374.5 1251.3,375.9 1248.1,376.5 1244.8,378.2 1241.5,379.1 1238.3,380.7 1235.0,382.3 1231.7,382.8 1228.4,383.8 1225.2,384.7 1221.9,385.0 1218.6,385.6 1215.4,387.2 1212.1,387.6 1208.8,388.5 1205.6,388.5 1202.3,388.5 1199.0,388.8 1195.7,389.5 1192.5,390.6 1189.2,390.9 1185.9,390.4 1182.7,391.5 1179.4,392.3 1176.1,392.4 1172.8,392.0 1169.6,392.8 1166.3,393.2 1163.0,393.2 1159.8,392.9 1156.5,393.4 1153.2,393.4 1150.0,394.2 1146.7,393.9 1143.4,394.0 1140.1,393.9 1136.9,394.2 1133.6,394.3 1130.3,395.1 1127.1,394.6 1123.8,394.2 1120.5,395.2 1117.2,394.7 1114.0,395.1 1110.7,394.7 1107.4,395.5 1104.2,395.0 1100.9,394.6 1097.6,394.5 1094.4,395.2 1091.1,395.6 1087.8,395.0 1084.5,395.7 1081.3,395.3 1078.0,395.6" fill="#dd8452" fill-opacity="0.37"/>
<text transform="translate(1399.10,375.50) rotate(-90) scale(0.863,1)" fill="#5676a8" font-size="8.5">BDS B3I, GAL E5B</text>
<text transform="translate(1532.20,378.50) rotate(-90) scale(0.863,1)" fill="#5676a8" font-size="8.5">GPS/QZSS L2C</text>
<text transform="translate(1632.10,378.50) rotate(-90) scale(0.863,1)" fill="#5676a8" font-size="8.5">GLO L2OF (-7)</text>
<text transform="translate(1669.60,378.50) rotate(-90) scale(0.863,1)" fill="#5676a8" font-size="8.5">GLO L2OF (+6)</text>
<polyline points="1078.0,393.9 1081.3,361.7 1084.5,393.1 1087.8,373.9 1091.1,367.3 1094.4,370.2 1097.6,391.7 1100.9,367.1 1104.2,360.2 1107.4,394.5 1110.7,362.1 1114.0,370.6 1117.2,392.3 1120.5,368.2 1123.8,363.6 1127.1,362.1 1130.3,392.9 1133.6,366.4 1136.9,363.9 1140.1,390.9 1143.4,366.9 1146.7,366.8 1150.0,391.8 1153.2,364.4 1156.5,391.6 1159.8,363.5 1163.0,361.2 1166.3,362.0 1169.6,390.2 1172.8,365.1 1176.1,389.0 1179.4,367.9 1182.7,363.3 1185.9,386.9 1189.2,363.5 1192.5,386.9 1195.7,360.0 1199.0,358.2 1202.3,384.9 1205.6,364.1 1208.8,361.0 1212.1,359.2 1215.4,384.2 1218.6,363.8 1221.9,383.3 1225.2,360.1 1228.4,380.6 1231.7,358.6 1235.0,361.5 1238.3,378.8 1241.5,357.5 1244.8,360.2 1248.1,356.6 1251.3,373.1 1254.6,357.5 1257.9,354.1 1261.2,371.2 1264.4,355.8 1267.7,354.4 1271.0,367.7 1274.2,355.7 1277.5,354.2 1280.8,365.7 1284.0,350.7 1287.3,363.4 1290.6,350.9 1293.9,362.3 1297.1,350.5 1300.4,347.4 1303.7,346.3 1306.9,359.7 1310.2,346.2 1313.5,346.3 1316.8,356.8 1320.0,345.6 1323.3,355.7 1326.6,345.8 1329.8,344.2 1333.1,354.0 1336.4,342.3 1339.6,345.4 1342.9,353.6 1346.2,345.3 1349.5,342.0 1352.7,342.6 1356.0,353.4 1359.3,343.4 1362.5,344.7 1365.8,352.9 1369.1,343.8 1372.4,353.2 1375.6,341.4 1378.9,344.7 1382.2,342.0 1385.4,353.1 1388.7,340.9 1392.0,343.3 1395.2,353.1 1398.5,343.0 1401.8,342.7 1405.1,342.5 1408.3,352.7 1411.6,340.9 1414.9,342.7 1418.1,353.8 1421.4,340.9 1424.7,338.0 1428.0,352.3 1431.2,341.0 1434.5,353.3 1437.8,341.9 1441.0,337.8 1444.3,350.6 1447.6,332.8 1450.8,327.6 1454.1,348.1 1457.4,328.0 1460.7,322.7 1463.9,349.2 1467.2,319.6 1470.5,320.3 1473.7,347.9 1477.0,320.0 1480.3,349.9 1483.6,312.5 1486.8,352.0 1490.1,316.4 1493.4,352.3 1496.6,315.5 1499.9,318.4 1503.2,318.9 1506.4,353.0 1509.7,302.9 1513.0,349.0 1516.3,305.9 1519.5,307.4 1522.8,309.7 1526.1,352.0 1529.3,306.1 1532.6,352.5 1535.9,307.7 1539.2,304.0 1542.4,354.8 1545.7,310.4 1549.0,318.1 1552.2,315.5 1555.5,354.3 1558.8,314.6 1562.0,325.0 1565.3,356.7 1568.6,316.2 1571.9,308.1 1575.1,353.7 1578.4,311.7 1581.7,307.4 1584.9,355.8 1588.2,315.3 1591.5,313.2 1594.8,314.4 1598.0,358.0 1601.3,320.0 1604.6,315.7 1607.8,319.0 1611.1,353.9 1614.4,314.2 1617.6,316.7 1620.9,355.2 1624.2,324.0 1627.5,334.0 1630.7,356.1 1634.0,319.0 1637.3,357.9 1640.5,326.9 1643.8,356.4 1647.1,324.5 1650.4,324.7 1653.6,328.3 1656.9,357.2 1660.2,328.7 1663.4,330.9 1666.7,358.0 1670.0,327.3 1673.2,359.8 1676.5,330.8 1679.8,361.3 1683.1,338.6 1686.3,332.8 1689.6,364.4 1692.9,351.7 1696.1,338.6 1699.4,335.3 1702.7,366.5 1706.0,344.7 1709.2,368.6 1712.5,345.1 1715.8,370.8 1719.0,345.3 1722.3,351.8 1725.6,373.2 1728.8,348.0 1732.1,375.7 1735.4,346.1 1738.7,346.3 1741.9,350.4 1745.2,379.1 1748.5,350.5 1751.7,380.7 1755.0,365.0 1758.3,356.0 1761.6,349.7 1764.8,382.2 1768.1,357.5 1771.4,358.1 1774.6,384.9 1777.9,351.8 1781.2,358.1 1784.4,351.9 1787.7,387.9 1791.0,351.8 1794.3,359.8 1797.5,386.8 1800.8,364.3 1804.1,359.4 1807.3,388.4 1810.6,356.4 1813.9,389.9 1817.2,366.6 1820.4,377.1 1823.7,390.4 1827.0,359.6 1830.2,389.7 1833.5,361.2 1836.8,365.2 1840.0,391.2 1843.3,360.4 1846.6,392.7 1849.9,368.1 1853.1,369.3 1856.4,391.8 1859.7,367.6 1862.9,390.4 1866.2,361.3 1869.5,390.7 1872.8,368.0 1876.0,369.2 1879.3,391.4 1882.6,370.6 1885.8,392.7 1889.1,365.8 1892.4,393.0 1895.6,366.1 1898.9,367.7 1902.2,393.4 1905.5,369.3 1908.7,370.9 1912.0,393.5" fill="none" stroke="#ec8a50" stroke-width="1.4" stroke-linejoin="round"/>
<polyline points="1078.0,368.1 1081.3,373.1 1084.5,377.9 1084.6,378.1 1087.8,373.4 1088.0,373.1 1091.1,373.3 1092.9,373.4 1094.4,372.6 1097.6,370.9 1100.9,369.2 1101.2,369.0 1104.2,369.6 1107.4,370.3 1110.7,371.0 1111.2,371.1 1114.0,377.7 1114.5,378.9 1117.2,374.6 1120.5,369.4 1121.1,368.5 1123.8,368.0 1127.1,367.4 1127.8,367.3 1130.3,368.6 1132.7,369.8 1133.6,369.2 1136.9,367.0 1137.7,366.5 1140.1,367.4 1143.4,368.7 1144.3,369.0 1146.7,372.5 1147.7,374.0 1150.0,371.7 1152.6,369.0 1153.2,368.8 1156.5,367.4 1159.8,366.1 1160.9,365.7 1163.0,365.5 1166.3,365.3 1169.6,365.0 1172.5,364.8 1172.8,365.3 1176.1,370.6 1179.2,375.6 1179.4,375.2 1182.7,367.9 1184.1,364.8 1185.9,364.5 1189.2,364.0 1192.5,363.5 1194.1,363.2 1195.7,364.8 1197.4,366.5 1199.0,365.9 1202.3,364.6 1204.0,364.0 1205.6,363.6 1208.8,362.8 1210.7,362.3 1212.1,368.2 1212.3,369.0 1215.4,366.4 1217.3,364.8 1218.6,364.3 1221.9,362.9 1225.2,361.6 1227.3,360.7 1228.4,360.8 1231.7,361.1 1235.0,361.3 1237.2,361.5 1238.3,362.2 1241.5,364.2 1243.8,365.7 1244.8,364.2 1248.1,359.3 1248.8,358.2 1251.3,358.0 1254.6,357.8 1257.9,357.6 1260.4,357.4 1261.2,357.2 1264.4,356.6 1267.7,355.9 1268.7,355.7 1271.0,355.5 1274.2,355.2 1277.5,354.8 1278.0,354.8 1280.8,353.0 1284.0,351.0 1284.6,350.6 1287.3,351.5 1289.6,352.3 1290.6,352.1 1293.9,351.2 1297.1,350.4 1299.6,349.8 1300.4,350.1 1303.7,351.6 1306.9,353.0 1307.9,353.4 1310.2,352.0 1313.5,349.9 1316.8,347.9 1317.8,347.3 1320.0,347.1 1323.3,346.9 1326.6,346.6 1327.8,346.5 1329.8,344.9 1333.1,342.3 1335.2,340.7 1336.4,342.3 1339.6,346.6 1341.0,348.5 1342.9,347.5 1346.2,345.6 1347.7,344.8 1349.5,344.7 1352.7,344.5 1356.0,344.3 1359.3,344.1 1360.9,344.0 1362.5,344.5 1365.8,345.6 1369.1,346.7 1370.9,347.3 1372.4,346.6 1375.6,345.0 1377.5,344.0 1378.9,344.2 1382.2,344.8 1385.4,345.3 1387.5,345.7 1388.7,345.5 1392.0,344.9 1394.1,344.5 1395.2,344.6 1398.5,345.0 1401.8,345.4 1404.0,345.7 1405.1,345.6 1408.3,345.2 1411.6,344.8 1414.9,344.5 1418.1,344.1 1419.0,344.0 1421.4,344.0 1423.9,344.0 1424.7,343.5 1428.0,341.3 1428.9,340.7 1431.2,342.1 1434.5,344.2 1435.5,344.8 1437.8,341.8 1441.0,337.6 1443.8,334.0 1444.3,333.8 1447.6,332.4 1450.8,331.1 1453.8,329.9 1454.1,329.7 1457.4,327.7 1460.7,325.7 1462.1,324.9 1463.9,326.9 1467.2,330.7 1468.7,332.4 1470.5,329.1 1473.7,323.3 1477.0,321.9 1478.0,321.5 1480.3,321.8 1483.6,322.2 1484.6,322.3 1486.8,321.2 1489.6,319.9 1490.1,318.4 1492.1,312.4 1493.4,315.5 1496.2,322.3 1496.6,322.8 1499.9,327.1 1502.0,329.8 1503.2,325.6 1506.4,314.4 1507.9,309.1 1509.7,311.3 1512.0,314.0 1513.0,312.4 1516.3,307.3 1517.8,304.9 1519.5,308.4 1521.1,311.6 1522.8,309.0 1524.4,306.6 1526.1,309.5 1527.8,312.4 1529.3,311.3 1531.1,309.9 1532.6,310.3 1535.9,311.1 1537.7,311.6 1539.2,312.1 1542.4,313.3 1544.3,314.0 1545.7,315.0 1549.0,317.5 1551.0,319.0 1552.2,318.2 1555.5,316.0 1555.9,315.7 1558.8,322.7 1562.0,330.5 1563.4,333.9 1565.3,328.2 1568.4,319.0 1568.6,318.7 1571.9,313.8 1573.4,311.6 1575.1,313.6 1577.5,316.5 1578.4,315.4 1580.8,312.4 1581.7,314.2 1584.1,319.0 1584.9,318.2 1588.2,314.9 1589.9,313.2 1591.5,316.4 1594.8,323.0 1595.7,324.8 1598.0,321.2 1599.9,318.2 1601.3,319.6 1604.0,322.3 1604.6,321.9 1607.8,319.8 1609.0,319.0 1611.1,320.6 1612.3,321.5 1614.4,321.0 1617.6,320.2 1619.0,319.9 1620.9,322.1 1623.9,325.7 1624.2,326.6 1627.5,336.3 1628.1,338.1 1630.7,329.7 1632.2,324.8 1634.0,326.1 1637.3,328.5 1638.0,329.0 1640.5,326.8 1643.8,324.0 1647.1,326.9 1650.4,329.7 1650.5,329.8 1653.6,329.5 1656.9,329.3 1660.2,329.0 1660.4,329.0 1663.4,330.5 1666.7,332.1 1670.0,333.7 1670.4,333.9 1673.2,333.0 1673.7,332.8 1676.5,334.9 1678.0,336.1 1679.8,337.2 1683.1,339.2 1686.3,341.1 1687.5,341.8 1689.6,346.0 1692.9,352.7 1694.1,355.1 1696.1,349.8 1699.4,341.0 1699.8,339.9 1702.7,344.0 1704.5,346.5 1706.0,347.3 1709.2,349.0 1711.2,350.0 1712.5,349.6 1715.8,348.7 1716.9,348.4 1719.0,351.4 1721.6,355.1 1722.3,355.8 1725.6,359.0 1726.4,359.8 1728.8,356.7 1731.1,353.8 1732.1,353.7 1735.4,353.3 1736.8,353.2 1738.7,353.6 1741.9,354.2 1745.2,354.9 1746.3,355.1 1748.5,357.5 1751.7,361.1 1755.0,364.7 1755.7,365.5 1758.3,361.1 1761.6,355.5 1762.4,354.1 1764.8,355.5 1768.1,357.4 1769.0,357.9 1771.4,358.5 1774.6,359.3 1776.6,359.8 1777.9,359.6 1781.2,359.3 1784.2,358.9 1784.4,359.0 1787.7,360.2 1791.0,361.4 1791.8,361.7 1794.3,362.7 1797.5,363.9 1799.4,364.6 1800.8,363.7 1804.1,361.4 1805.0,360.8 1807.3,361.7 1810.6,363.0 1813.9,364.4 1814.5,364.6 1817.2,369.9 1820.4,376.2 1821.2,377.8 1823.7,370.2 1825.9,363.6 1827.0,363.7 1830.2,364.2 1833.5,364.6 1836.8,364.6 1840.0,364.6 1843.0,364.6 1843.3,364.9 1846.6,368.2 1849.9,371.5 1852.4,374.0 1853.1,373.3 1856.4,370.1 1858.1,368.4 1859.7,368.2 1862.9,367.9 1866.2,367.5 1867.6,367.4 1869.5,367.8 1872.8,368.4 1876.0,369.1 1877.1,369.3 1879.3,372.5 1882.6,377.3 1885.6,381.6 1885.8,380.9 1889.1,369.4 1889.4,368.4 1892.4,369.2 1895.6,370.1 1896.0,370.2 1898.9,370.2 1902.2,370.2 1905.5,370.2 1908.7,371.1 1912.0,372.1" fill="none" stroke="#52ad62" stroke-width="1.4" stroke-linejoin="round"/>
</g>
<rect x="1078.00" y="254" width="1" height="143.00" fill="#3e3e43"/>
<rect x="1078.00" y="396.00" width="834.00" height="1" fill="#3e3e43"/>
<rect x="1085.50" y="261.20" width="32" height="14" fill="#2a2a2d" stroke="#505056" stroke-width="1"/>
<rect x="1089.40" y="264.70" width="6.6" height="7" fill="#55a868"/>
<text transform="translate(1097.00,271.70) scale(0.863,1)" fill="#d6d6d6" font-size="8.5">Mean</text>
<rect x="856" y="0" width="1" height="422" fill="#121316"/>
<rect x="857" y="0" width="1" height="422" fill="#44454e"/>
<rect x="858" y="0" width="1" height="422" fill="#121316"/>
<rect x="1043" y="3" width="1" height="419" fill="#2a2a30"/>
<text transform="translate(888.70,11.00) scale(0.863,1)" fill="#a4a4a4" font-size="8.5">Count: Age: Rate: Name:</text>
<polygon points="867.1,16.71 871.9,16.71 869.5,19.91" fill="#e8e8e8"/>
<text transform="translate(876.40,21.91) scale(0.863,1)" fill="#d6d6d6" font-size="8.5">NMEA-GN</text>
<text transform="translate(888.70,33.20) scale(0.863,1)" fill="#d6d6d6" font-size="8.5">    26    -    - NMEA-GN-GGA</text>
<text transform="translate(888.70,44.49) scale(0.863,1)" fill="#d6d6d6" font-size="8.5">    26    -    - NMEA-GN-RMC</text>
<polygon points="867.1,50.58 871.9,50.58 869.5,53.78" fill="#e8e8e8"/>
<text transform="translate(876.40,55.78) scale(0.863,1)" fill="#d6d6d6" font-size="8.5">UBX-INF</text>
<text transform="translate(888.70,67.07) scale(0.863,1)" fill="#d6d6d6" font-size="8.5">     1    -    - UBX-INF-DEBUG</text>
<polygon points="867.1,73.16 871.9,73.16 869.5,76.36" fill="#e8e8e8"/>
<text transform="translate(876.40,78.36) scale(0.863,1)" fill="#d6d6d6" font-size="8.5">UBX-MON</text>
<text transform="translate(888.70,89.65) scale(0.863,1)" fill="#d6d6d6" font-size="8.5">    26    -    - UBX-MON-COMMS</text>
<text transform="translate(888.70,100.94) scale(0.863,1)" fill="#d6d6d6" font-size="8.5">    25    -    - UBX-MON-HW</text>
<text transform="translate(888.70,112.23) scale(0.863,1)" fill="#d6d6d6" font-size="8.5">    25    -    - UBX-MON-HW2</text>
<text transform="translate(888.70,123.52) scale(0.863,1)" fill="#d6d6d6" font-size="8.5">    26    -    - UBX-MON-HW3</text>
<text transform="translate(888.70,134.81) scale(0.863,1)" fill="#d6d6d6" font-size="8.5">    26    -    - UBX-MON-MSGPP</text>
<text transform="translate(888.70,146.10) scale(0.863,1)" fill="#d6d6d6" font-size="8.5">    26    -    - UBX-MON-RF</text>
<rect x="873" y="148.7" width="165.5" height="11.2" fill="#243d5a"/>
<text transform="translate(888.70,157.39) scale(0.863,1)" fill="#d6d6d6" font-size="8.5">    26    -    - UBX-MON-SPAN</text>
<text transform="translate(888.70,168.68) scale(0.863,1)" fill="#d6d6d6" font-size="8.5">    25    -    - UBX-MON-TEMP</text>
<polygon points="867.1,174.77 871.9,174.77 869.5,177.97" fill="#e8e8e8"/>
<text transform="translate(876.40,179.97) scale(0.863,1)" fill="#d6d6d6" font-size="8.5">UBX-NAV</text>
<text transform="translate(888.70,191.26) scale(0.863,1)" fill="#d6d6d6" font-size="8.5">   128    -    - UBX-NAV-CLOCK</text>
<text transform="translate(888.70,202.55) scale(0.863,1)" fill="#d6d6d6" font-size="8.5">   128    -    - UBX-NAV-COV</text>
<text transform="translate(888.70,213.84) scale(0.863,1)" fill="#d6d6d6" font-size="8.5">   128    -    - UBX-NAV-EOE</text>
<text transform="translate(888.70,225.13) scale(0.863,1)" fill="#d6d6d6" font-size="8.5">   128    -    - UBX-NAV-HPPOSECEF</text>
<text transform="translate(888.70,236.42) scale(0.863,1)" fill="#d6d6d6" font-size="8.5">   128    -    - UBX-NAV-PVT</text>
<text transform="translate(888.70,247.71) scale(0.863,1)" fill="#d6d6d6" font-size="8.5">   128    -    - UBX-NAV-RELPOSNED</text>
<text transform="translate(888.70,259.00) scale(0.863,1)" fill="#d6d6d6" font-size="8.5">   128    -    - UBX-NAV-SAT</text>
<text transform="translate(888.70,270.29) scale(0.863,1)" fill="#d6d6d6" font-size="8.5">   128    -    - UBX-NAV-SIG</text>
<text transform="translate(888.70,281.58) scale(0.863,1)" fill="#d6d6d6" font-size="8.5">   128    -    - UBX-NAV-STATUS</text>
<text transform="translate(888.70,292.87) scale(0.863,1)" fill="#d6d6d6" font-size="8.5">   128    -    - UBX-NAV-TIMEGPS</text>
<text transform="translate(888.70,304.16) scale(0.863,1)" fill="#d6d6d6" font-size="8.5">   128    -    - UBX-NAV-VELECEF</text>
<polygon points="867.1,310.25 871.9,310.25 869.5,313.45" fill="#e8e8e8"/>
<text transform="translate(876.40,315.45) scale(0.863,1)" fill="#d6d6d6" font-size="8.5">UBX-RXM</text>
<text transform="translate(888.70,326.74) scale(0.863,1)" fill="#d6d6d6" font-size="8.5">   128    -    - UBX-RXM-RAWX</text>
<text transform="translate(888.70,338.03) scale(0.863,1)" fill="#d6d6d6" font-size="8.5">    62    -    - UBX-RXM-RTCM</text>
<text transform="translate(888.70,349.32) scale(0.863,1)" fill="#d6d6d6" font-size="8.5">   412    -    - UBX-RXM-SFRBX</text>
<polygon points="867.1,355.41 871.9,355.41 869.5,358.61" fill="#e8e8e8"/>
<text transform="translate(876.40,360.61) scale(0.863,1)" fill="#d6d6d6" font-size="8.5">UBX-TIM</text>
<text transform="translate(888.70,371.90) scale(0.863,1)" fill="#d6d6d6" font-size="8.5">    25    -    - UBX-TIM-TP</text>
</svg>
</body></html>
